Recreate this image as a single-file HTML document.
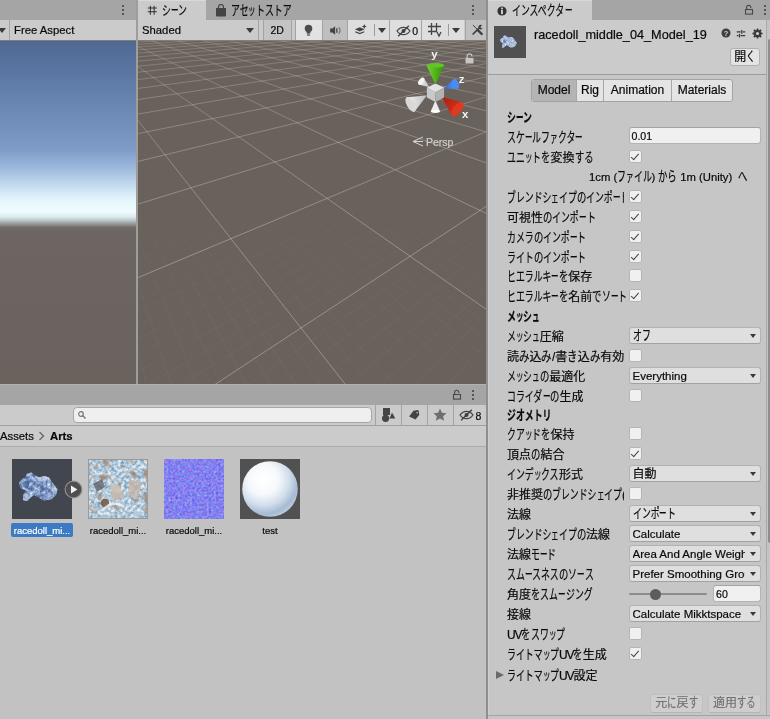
<!DOCTYPE html><html lang="ja"><head><meta charset="utf-8"><title>Unity</title><style>
*{box-sizing:border-box;margin:0;padding:0}
html,body{width:770px;height:719px;overflow:hidden;background:#c6c6c6}
body{position:relative;-webkit-font-smoothing:antialiased;-webkit-text-stroke-width:.2px;font-family:"Liberation Sans","Noto Sans CJK JP",sans-serif;font-size:12px;color:#090909;line-height:1}
.a{position:absolute}
.k{display:inline-block;white-space:nowrap;vertical-align:baseline;overflow:visible;font-size:1.12em;line-height:1}
.k>span{display:inline-block;transform-origin:0 50%;white-space:nowrap}
.t{position:absolute;white-space:nowrap;height:16px;line-height:16px}
.tabbar{background:#a5a5a5}
.tab{background:#cbcbcb}
.tb{background:#cbcbcb}
.dots i{position:absolute;left:0;width:2px;height:2px;background:#3c3c3c;border-radius:1px}
.vd{position:absolute;width:1px;background:#a3a3a3}
.fld{position:absolute;background:#f0f0f0;border:1px solid #b3b3b3;border-top-color:#a3a3a3;border-radius:3px;height:17px;line-height:17px;padding-left:2px;white-space:nowrap;overflow:hidden}
.dd{position:absolute;background:#dfdfdf;border:1px solid #b2b2b2;border-bottom-color:#a2a2a2;border-radius:3px;height:17px;line-height:16px;padding-left:3px;white-space:nowrap;overflow:hidden}
.dd:after{content:"";position:absolute;right:4.5px;top:5.5px;border:3.5px solid transparent;border-top:4.5px solid #3a3a3a;border-bottom:0}
.dd>span.v{display:block;width:112.5px;overflow:hidden;white-space:nowrap}
.cb{position:absolute;width:13px;height:13px;background:#f0f0f0;border:1px solid #b5b5b5;border-radius:2px}
.cb.on:after{content:"";position:absolute;left:3.7px;top:1.3px;width:3.3px;height:6.6px;border:solid #424242;border-width:0 1.8px 1.8px 0;transform:rotate(41deg)}
.lbl{position:absolute;left:507px;white-space:nowrap;height:18px;line-height:18px;margin-top:1.2px}
.b{font-weight:bold}
.l{font-size:11.3px}
.dd.l{font-size:11.5px}
.n{font-size:10.6px}
.uv{font-size:12px;letter-spacing:-1.1px}
</style></head><body><div id="root" style="position:absolute;left:0;top:0;width:770px;height:719px;will-change:transform">
<div class="a tabbar" style="left:0;top:0;width:136px;height:20px"></div>
<div class="a dots" style="left:122px;top:5px;width:2px;height:12px"><i style="top:0"></i><i style="top:4px"></i><i style="top:8px"></i></div>
<div class="a tabbar" style="left:138px;top:0;width:348px;height:20px"></div>
<div class="a tab" style="left:138px;top:0;width:68px;height:21px;border-top:1px solid #d8d8d8"></div>
<div class="a dots" style="left:472px;top:5px;width:2px;height:12px"><i style="top:0"></i><i style="top:4px"></i><i style="top:8px"></i></div>
<div class="a" style="left:136px;top:0;width:2px;height:385px;background:#a09c98"></div>
<div class="a" style="left:486px;top:0;width:2px;height:719px;background:#8f8f8f"></div>
<div class="a tb" style="left:0;top:20px;width:136px;height:20px"></div>
<div class="a tb" style="left:138px;top:20px;width:348px;height:20px"></div>
<div class="a" style="left:0;top:40px;width:136px;height:1px;background:#7f7f7f"></div>
<div class="a" style="left:138px;top:40px;width:348px;height:1px;background:#7f7f7f"></div>
<div class="a" style="left:0;top:28px;border:4px solid transparent;border-top:5px solid #3a3a3a;border-bottom:0;margin-left:-2px"></div>
<div class="vd" style="left:9px;top:20px;height:20px"></div>
<div class="t l" style="left:14px;top:22px">Free Aspect</div>
<svg class="a" style="left:146.6px;top:4.8px" width="10.5" height="10.5" viewBox="0 0 14 13"><g stroke="#2a2a2a" stroke-width="1.3" fill="none"><path d="M1 3.5h12M1 8.5h12M4.5 0.5v12M9.5 0.5v12"/></g></svg>
<div class="t" style="left:162px;top:3.2px"><span class="k" style="width:8.88px"><span style="transform:scaleX(0.661)">シ</span></span><span class="k" style="width:7.56px"><span style="transform:scaleX(0.562)">ー</span></span><span class="k" style="width:8.88px"><span style="transform:scaleX(0.661)">ン</span></span></div>
<svg class="a" style="left:215px;top:4px" width="12" height="13" viewBox="0 0 12 13"><path d="M1 4h10v7.5a1 1 0 0 1-1 1H2a1 1 0 0 1-1-1z" fill="#444"/><path d="M3.5 5V3a2.5 2.5 0 0 1 5 0v2" fill="none" stroke="#444" stroke-width="1.2"/></svg>
<div class="t" style="left:230.5px;top:3.2px"><span class="k" style="width:17.76px"><span style="transform:scaleX(0.661)">アセ</span></span><span class="k" style="width:7.56px"><span style="transform:scaleX(0.562)">ッ</span></span><span class="k" style="width:35.52px"><span style="transform:scaleX(0.661)">トストア</span></span></div>
<div class="t l" style="left:142px;top:22px">Shaded</div>
<div class="a" style="left:246px;top:28px;border:4px solid transparent;border-top:5px solid #3a3a3a;border-bottom:0"></div>
<div class="vd" style="left:258px;top:20px;height:20px"></div>
<div class="vd" style="left:263px;top:20px;height:20px"></div>
<div class="a" style="left:264px;top:20px;width:27px;height:20px;background:#c4c4c4"></div>
<div class="t" style="left:270.5px;top:22.3px;font-size:10.5px">2D</div>
<div class="vd" style="left:291px;top:20px;height:20px"></div>
<div class="vd" style="left:295px;top:20px;height:20px"></div>
<div class="a" style="left:296px;top:20px;width:27px;height:20px;background:#e2e2e2"></div>
<div class="a" style="left:323px;top:20px;width:25px;height:20px;background:#bfbfbf"></div>
<div class="a" style="left:348px;top:20px;width:42px;height:20px;background:#dedede"></div>
<div class="a" style="left:390px;top:20px;width:32px;height:20px;background:#dedede"></div>
<div class="a" style="left:422px;top:20px;width:42px;height:20px;background:#dedede"></div>
<div class="a" style="left:466px;top:20px;width:20px;height:20px;background:#c0c0c0"></div>
<div class="vd" style="left:322px;top:20px;height:20px"></div>
<div class="vd" style="left:347px;top:20px;height:20px"></div>
<div class="vd" style="left:389px;top:20px;height:20px"></div>
<div class="vd" style="left:421px;top:20px;height:20px"></div>
<div class="vd" style="left:465px;top:20px;height:20px"></div>
<svg class="a" style="left:303.4px;top:23.6px" width="11" height="13" viewBox="0 0 14 17"><g fill="#4d4d4d"><circle cx="7" cy="6" r="4.9"/><rect x="4.6" y="9" width="4.8" height="3.6"/><rect x="5" y="13.6" width="4" height="1.6"/></g></svg>
<svg class="a" style="left:328.5px;top:24.6px" width="14" height="11" viewBox="0 0 17 14"><path d="M1 4.6h2.8L7.4 1.6v10.8L3.8 9.4H1z" fill="#444"/><path d="M9.6 4v6" stroke="#444" stroke-width="1.7"/><path d="M12 2.8a6 6 0 0 1 0 8.4" stroke="#4a4a4a" stroke-width="1.1" fill="none"/></svg>
<svg class="a" style="left:353.5px;top:24px" width="14" height="11.5" viewBox="0 0 17 14"><path d="M1 6.5l6-2.5 6 2.5-6 2.5z" fill="#444"/><path d="M1.5 9.5l5.5 2.3 5.5-2.3" stroke="#444" stroke-width="1.5" fill="none"/><path d="M12.5 0l.9 2.1 2.1.9-2.1.9-.9 2.1-.9-2.1-2.1-.9 2.1-.9z" fill="#444"/></svg>
<div class="a" style="left:373.5px;top:24px;width:1px;height:12px;background:#9a9a9a"></div>
<div class="a" style="left:378px;top:28px;border:4px solid transparent;border-top:5px solid #3a3a3a;border-bottom:0"></div>
<svg class="a" style="left:395.5px;top:24.5px" width="15" height="12" viewBox="0 0 18 14"><path d="M1.2 7c2.4-3.4 4.9-4.4 7.8-4.4s5.4 1 7.8 4.4c-2.4 3.4-4.9 4.4-7.8 4.4s-5.4-1-7.8-4.4z" fill="none" stroke="#444" stroke-width="1.5"/><circle cx="9" cy="7" r="2.4" fill="#444"/><path d="M2.6 13.2L15.4 .8" stroke="#3e3e3e" stroke-width="1.6"/></svg>
<div class="t" style="left:412.3px;top:23.3px;font-size:10.5px">0</div>
<svg class="a" style="left:427px;top:22px" width="16" height="16" viewBox="0 0 16 16"><g stroke="#444" stroke-width="1.3" fill="none"><path d="M1 4.5h13M1 9.5h9M4.5 1v12M9.5 1v9"/><path d="M10 10l2 4 2-4" /></g></svg>
<div class="a" style="left:447.5px;top:24px;width:1px;height:12px;background:#9a9a9a"></div>
<div class="a" style="left:452px;top:28px;border:4px solid transparent;border-top:5px solid #3a3a3a;border-bottom:0"></div>
<svg class="a" style="left:470.5px;top:24px" width="12.5" height="11.6" viewBox="0 0 14 13"><path d="M1.8 11.8L9.6 4" stroke="#3c3c3c" stroke-width="1.8" fill="none"/><path d="M8.2 3.4a3 3 0 0 1 4.4-2.2l-2 2 .6 1.4 1.4.6 1.2-1.8a3 3 0 0 1-3.8 2.6z" fill="#3c3c3c"/><path d="M2.2 1.2L7 6" stroke="#3c3c3c" stroke-width="1.1"/><path d="M7.6 6.8L12 11.2" stroke="#3c3c3c" stroke-width="2.6" stroke-linecap="round"/></svg>
<div class="a" style="left:0;top:41px;width:136px;height:343px;background:linear-gradient(180deg,#506993 0px,#5a75a2 30px,#6683b0 57px,#7f9cc8 109px,#9db8dc 127px,#c5dcf0 145px,#e6f7fd 160px,#eefcff 171px,#dcebee 176px,#b4bfc1 180px,#8a8a89 184px,#716a67 186.5px,#6c6562 191px,#6a625d 343px)"></div>
<svg class="a" style="left:138px;top:41px" width="348" height="343" viewBox="0 0 348 343"><rect width="348" height="343" fill="#69615c"/>
<defs><linearGradient id="gv98" gradientUnits="userSpaceOnUse" x1="74.2" y1="345.3" x2="352.4" y2="162.5"><stop offset="0.00" stop-color="#d2cbc0" stop-opacity="0.44"/><stop offset="0.25" stop-color="#d2cbc0" stop-opacity="0.44"/><stop offset="0.50" stop-color="#d2cbc0" stop-opacity="0.44"/><stop offset="0.75" stop-color="#d2cbc0" stop-opacity="0.44"/><stop offset="1.00" stop-color="#d2cbc0" stop-opacity="0.41"/></linearGradient><linearGradient id="gv99" gradientUnits="userSpaceOnUse" x1="-4.1" y1="238.3" x2="353.0" y2="88.7"><stop offset="0.00" stop-color="#d2cbc0" stop-opacity="0.44"/><stop offset="0.25" stop-color="#d2cbc0" stop-opacity="0.44"/><stop offset="0.50" stop-color="#d2cbc0" stop-opacity="0.41"/><stop offset="0.75" stop-color="#d2cbc0" stop-opacity="0.38"/><stop offset="1.00" stop-color="#d2cbc0" stop-opacity="0.35"/></linearGradient><linearGradient id="gu100" gradientUnits="userSpaceOnUse" x1="209.9" y1="346.6" x2="-4.9" y2="73.2"><stop offset="0.00" stop-color="#d2cbc0" stop-opacity="0.44"/><stop offset="0.25" stop-color="#d2cbc0" stop-opacity="0.44"/><stop offset="0.50" stop-color="#d2cbc0" stop-opacity="0.44"/><stop offset="0.75" stop-color="#d2cbc0" stop-opacity="0.40"/><stop offset="1.00" stop-color="#d2cbc0" stop-opacity="0.33"/></linearGradient><linearGradient id="gv100" gradientUnits="userSpaceOnUse" x1="-4.6" y1="164.5" x2="352.7" y2="54.5"><stop offset="0.00" stop-color="#d2cbc0" stop-opacity="0.41"/><stop offset="0.25" stop-color="#d2cbc0" stop-opacity="0.39"/><stop offset="0.50" stop-color="#d2cbc0" stop-opacity="0.37"/><stop offset="0.75" stop-color="#d2cbc0" stop-opacity="0.34"/><stop offset="1.00" stop-color="#d2cbc0" stop-opacity="0.31"/></linearGradient><linearGradient id="gu101" gradientUnits="userSpaceOnUse" x1="351.8" y1="270.8" x2="-4.9" y2="22.3"><stop offset="0.00" stop-color="#d2cbc0" stop-opacity="0.44"/><stop offset="0.25" stop-color="#d2cbc0" stop-opacity="0.44"/><stop offset="0.50" stop-color="#d2cbc0" stop-opacity="0.40"/><stop offset="0.75" stop-color="#d2cbc0" stop-opacity="0.35"/><stop offset="1.00" stop-color="#d2cbc0" stop-opacity="0.27"/></linearGradient><linearGradient id="gv101" gradientUnits="userSpaceOnUse" x1="-4.9" y1="121.6" x2="352.6" y2="34.7"><stop offset="0.00" stop-color="#d2cbc0" stop-opacity="0.38"/><stop offset="0.25" stop-color="#d2cbc0" stop-opacity="0.36"/><stop offset="0.50" stop-color="#d2cbc0" stop-opacity="0.34"/><stop offset="0.75" stop-color="#d2cbc0" stop-opacity="0.32"/><stop offset="1.00" stop-color="#d2cbc0" stop-opacity="0.29"/></linearGradient><linearGradient id="gu102" gradientUnits="userSpaceOnUse" x1="353.0" y1="174.7" x2="-4.9" y2="3.1"><stop offset="0.00" stop-color="#d2cbc0" stop-opacity="0.42"/><stop offset="0.25" stop-color="#d2cbc0" stop-opacity="0.39"/><stop offset="0.50" stop-color="#d2cbc0" stop-opacity="0.35"/><stop offset="0.75" stop-color="#d2cbc0" stop-opacity="0.30"/><stop offset="1.00" stop-color="#d2cbc0" stop-opacity="0.23"/></linearGradient><linearGradient id="gv102" gradientUnits="userSpaceOnUse" x1="-3.4" y1="93.3" x2="352.8" y2="21.6"><stop offset="0.00" stop-color="#d2cbc0" stop-opacity="0.35"/><stop offset="0.25" stop-color="#d2cbc0" stop-opacity="0.34"/><stop offset="0.50" stop-color="#d2cbc0" stop-opacity="0.32"/><stop offset="0.75" stop-color="#d2cbc0" stop-opacity="0.29"/><stop offset="1.00" stop-color="#d2cbc0" stop-opacity="0.27"/></linearGradient><linearGradient id="gu103" gradientUnits="userSpaceOnUse" x1="351.8" y1="123.3" x2="0.6" y2="-5.0"><stop offset="0.00" stop-color="#d2cbc0" stop-opacity="0.38"/><stop offset="0.25" stop-color="#d2cbc0" stop-opacity="0.35"/><stop offset="0.50" stop-color="#d2cbc0" stop-opacity="0.32"/><stop offset="0.75" stop-color="#d2cbc0" stop-opacity="0.28"/><stop offset="1.00" stop-color="#d2cbc0" stop-opacity="0.22"/></linearGradient><linearGradient id="gv103" gradientUnits="userSpaceOnUse" x1="-3.7" y1="73.7" x2="352.7" y2="12.5"><stop offset="0.00" stop-color="#d2cbc0" stop-opacity="0.33"/><stop offset="0.25" stop-color="#d2cbc0" stop-opacity="0.32"/><stop offset="0.50" stop-color="#d2cbc0" stop-opacity="0.30"/><stop offset="0.75" stop-color="#d2cbc0" stop-opacity="0.28"/><stop offset="1.00" stop-color="#d2cbc0" stop-opacity="0.25"/></linearGradient><linearGradient id="gu104" gradientUnits="userSpaceOnUse" x1="352.5" y1="92.2" x2="23.0" y2="-5.0"><stop offset="0.00" stop-color="#d2cbc0" stop-opacity="0.35"/><stop offset="0.25" stop-color="#d2cbc0" stop-opacity="0.33"/><stop offset="0.50" stop-color="#d2cbc0" stop-opacity="0.30"/><stop offset="0.75" stop-color="#d2cbc0" stop-opacity="0.26"/><stop offset="1.00" stop-color="#d2cbc0" stop-opacity="0.22"/></linearGradient><linearGradient id="gv104" gradientUnits="userSpaceOnUse" x1="-4.0" y1="59.2" x2="352.9" y2="5.7"><stop offset="0.00" stop-color="#d2cbc0" stop-opacity="0.32"/><stop offset="0.25" stop-color="#d2cbc0" stop-opacity="0.30"/><stop offset="0.50" stop-color="#d2cbc0" stop-opacity="0.28"/><stop offset="0.75" stop-color="#d2cbc0" stop-opacity="0.26"/><stop offset="1.00" stop-color="#d2cbc0" stop-opacity="0.24"/></linearGradient><linearGradient id="gu105" gradientUnits="userSpaceOnUse" x1="351.8" y1="70.7" x2="45.5" y2="-5.0"><stop offset="0.00" stop-color="#d2cbc0" stop-opacity="0.33"/><stop offset="0.25" stop-color="#d2cbc0" stop-opacity="0.31"/><stop offset="0.50" stop-color="#d2cbc0" stop-opacity="0.28"/><stop offset="0.75" stop-color="#d2cbc0" stop-opacity="0.26"/><stop offset="1.00" stop-color="#d2cbc0" stop-opacity="0.22"/></linearGradient><linearGradient id="gv105" gradientUnits="userSpaceOnUse" x1="-4.2" y1="48.0" x2="352.8" y2="0.5"><stop offset="0.00" stop-color="#d2cbc0" stop-opacity="0.30"/><stop offset="0.25" stop-color="#d2cbc0" stop-opacity="0.29"/><stop offset="0.50" stop-color="#d2cbc0" stop-opacity="0.27"/><stop offset="0.75" stop-color="#d2cbc0" stop-opacity="0.25"/><stop offset="1.00" stop-color="#d2cbc0" stop-opacity="0.23"/></linearGradient><linearGradient id="gu106" gradientUnits="userSpaceOnUse" x1="352.3" y1="55.5" x2="68.0" y2="-5.0"><stop offset="0.00" stop-color="#d2cbc0" stop-opacity="0.31"/><stop offset="0.25" stop-color="#d2cbc0" stop-opacity="0.30"/><stop offset="0.50" stop-color="#d2cbc0" stop-opacity="0.27"/><stop offset="0.75" stop-color="#d2cbc0" stop-opacity="0.25"/><stop offset="1.00" stop-color="#d2cbc0" stop-opacity="0.22"/></linearGradient><linearGradient id="gv106" gradientUnits="userSpaceOnUse" x1="-4.4" y1="39.0" x2="352.9" y2="-3.6"><stop offset="0.00" stop-color="#d2cbc0" stop-opacity="0.29"/><stop offset="0.25" stop-color="#d2cbc0" stop-opacity="0.28"/><stop offset="0.50" stop-color="#d2cbc0" stop-opacity="0.26"/><stop offset="0.75" stop-color="#d2cbc0" stop-opacity="0.24"/><stop offset="1.00" stop-color="#d2cbc0" stop-opacity="0.22"/></linearGradient><linearGradient id="gu107" gradientUnits="userSpaceOnUse" x1="352.7" y1="44.0" x2="90.5" y2="-5.0"><stop offset="0.00" stop-color="#d2cbc0" stop-opacity="0.30"/><stop offset="0.25" stop-color="#d2cbc0" stop-opacity="0.28"/><stop offset="0.50" stop-color="#d2cbc0" stop-opacity="0.26"/><stop offset="0.75" stop-color="#d2cbc0" stop-opacity="0.24"/><stop offset="1.00" stop-color="#d2cbc0" stop-opacity="0.22"/></linearGradient><linearGradient id="gv107" gradientUnits="userSpaceOnUse" x1="-4.5" y1="31.7" x2="334.3" y2="-5.0"><stop offset="0.00" stop-color="#d2cbc0" stop-opacity="0.28"/><stop offset="0.25" stop-color="#d2cbc0" stop-opacity="0.27"/><stop offset="0.50" stop-color="#d2cbc0" stop-opacity="0.25"/><stop offset="0.75" stop-color="#d2cbc0" stop-opacity="0.24"/><stop offset="1.00" stop-color="#d2cbc0" stop-opacity="0.22"/></linearGradient><linearGradient id="gu108" gradientUnits="userSpaceOnUse" x1="352.2" y1="34.8" x2="113.1" y2="-5.0"><stop offset="0.00" stop-color="#d2cbc0" stop-opacity="0.29"/><stop offset="0.25" stop-color="#d2cbc0" stop-opacity="0.27"/><stop offset="0.50" stop-color="#d2cbc0" stop-opacity="0.26"/><stop offset="0.75" stop-color="#d2cbc0" stop-opacity="0.24"/><stop offset="1.00" stop-color="#d2cbc0" stop-opacity="0.22"/></linearGradient><linearGradient id="gv108" gradientUnits="userSpaceOnUse" x1="-4.7" y1="25.7" x2="304.4" y2="-5.0"><stop offset="0.00" stop-color="#d2cbc0" stop-opacity="0.27"/><stop offset="0.25" stop-color="#d2cbc0" stop-opacity="0.26"/><stop offset="0.50" stop-color="#d2cbc0" stop-opacity="0.25"/><stop offset="0.75" stop-color="#d2cbc0" stop-opacity="0.23"/><stop offset="1.00" stop-color="#d2cbc0" stop-opacity="0.22"/></linearGradient><linearGradient id="gu109" gradientUnits="userSpaceOnUse" x1="352.5" y1="27.5" x2="135.5" y2="-5.0"><stop offset="0.00" stop-color="#d2cbc0" stop-opacity="0.28"/><stop offset="0.25" stop-color="#d2cbc0" stop-opacity="0.26"/><stop offset="0.50" stop-color="#d2cbc0" stop-opacity="0.25"/><stop offset="0.75" stop-color="#d2cbc0" stop-opacity="0.24"/><stop offset="1.00" stop-color="#d2cbc0" stop-opacity="0.22"/></linearGradient><linearGradient id="gv109" gradientUnits="userSpaceOnUse" x1="-4.8" y1="20.6" x2="274.6" y2="-5.0"><stop offset="0.00" stop-color="#d2cbc0" stop-opacity="0.27"/><stop offset="0.25" stop-color="#d2cbc0" stop-opacity="0.26"/><stop offset="0.50" stop-color="#d2cbc0" stop-opacity="0.24"/><stop offset="0.75" stop-color="#d2cbc0" stop-opacity="0.23"/><stop offset="1.00" stop-color="#d2cbc0" stop-opacity="0.22"/></linearGradient><linearGradient id="gu110" gradientUnits="userSpaceOnUse" x1="352.8" y1="21.5" x2="158.2" y2="-5.0"><stop offset="0.00" stop-color="#d2cbc0" stop-opacity="0.27"/><stop offset="0.25" stop-color="#d2cbc0" stop-opacity="0.26"/><stop offset="0.50" stop-color="#d2cbc0" stop-opacity="0.25"/><stop offset="0.75" stop-color="#d2cbc0" stop-opacity="0.23"/><stop offset="1.00" stop-color="#d2cbc0" stop-opacity="0.22"/></linearGradient><linearGradient id="gv110" gradientUnits="userSpaceOnUse" x1="-4.8" y1="16.3" x2="244.9" y2="-5.0"><stop offset="0.00" stop-color="#d2cbc0" stop-opacity="0.26"/><stop offset="0.25" stop-color="#d2cbc0" stop-opacity="0.25"/><stop offset="0.50" stop-color="#d2cbc0" stop-opacity="0.24"/><stop offset="0.75" stop-color="#d2cbc0" stop-opacity="0.23"/><stop offset="1.00" stop-color="#d2cbc0" stop-opacity="0.22"/></linearGradient><linearGradient id="gu111" gradientUnits="userSpaceOnUse" x1="352.4" y1="16.4" x2="180.9" y2="-5.0"><stop offset="0.00" stop-color="#d2cbc0" stop-opacity="0.26"/><stop offset="0.25" stop-color="#d2cbc0" stop-opacity="0.25"/><stop offset="0.50" stop-color="#d2cbc0" stop-opacity="0.24"/><stop offset="0.75" stop-color="#d2cbc0" stop-opacity="0.23"/><stop offset="1.00" stop-color="#d2cbc0" stop-opacity="0.22"/></linearGradient><linearGradient id="gv111" gradientUnits="userSpaceOnUse" x1="-4.9" y1="12.5" x2="214.9" y2="-5.0"><stop offset="0.00" stop-color="#d2cbc0" stop-opacity="0.25"/><stop offset="0.25" stop-color="#d2cbc0" stop-opacity="0.24"/><stop offset="0.50" stop-color="#d2cbc0" stop-opacity="0.24"/><stop offset="0.75" stop-color="#d2cbc0" stop-opacity="0.23"/><stop offset="1.00" stop-color="#d2cbc0" stop-opacity="0.22"/></linearGradient><linearGradient id="gu112" gradientUnits="userSpaceOnUse" x1="352.6" y1="12.2" x2="203.7" y2="-5.0"><stop offset="0.00" stop-color="#d2cbc0" stop-opacity="0.25"/><stop offset="0.25" stop-color="#d2cbc0" stop-opacity="0.25"/><stop offset="0.50" stop-color="#d2cbc0" stop-opacity="0.24"/><stop offset="0.75" stop-color="#d2cbc0" stop-opacity="0.23"/><stop offset="1.00" stop-color="#d2cbc0" stop-opacity="0.22"/></linearGradient><linearGradient id="gv112" gradientUnits="userSpaceOnUse" x1="-5.0" y1="9.2" x2="185.3" y2="-5.0"><stop offset="0.00" stop-color="#d2cbc0" stop-opacity="0.25"/><stop offset="0.25" stop-color="#d2cbc0" stop-opacity="0.24"/><stop offset="0.50" stop-color="#d2cbc0" stop-opacity="0.23"/><stop offset="0.75" stop-color="#d2cbc0" stop-opacity="0.23"/><stop offset="1.00" stop-color="#d2cbc0" stop-opacity="0.22"/></linearGradient><linearGradient id="gu113" gradientUnits="userSpaceOnUse" x1="352.9" y1="8.5" x2="226.5" y2="-5.0"><stop offset="0.00" stop-color="#d2cbc0" stop-opacity="0.25"/><stop offset="0.25" stop-color="#d2cbc0" stop-opacity="0.24"/><stop offset="0.50" stop-color="#d2cbc0" stop-opacity="0.23"/><stop offset="0.75" stop-color="#d2cbc0" stop-opacity="0.23"/><stop offset="1.00" stop-color="#d2cbc0" stop-opacity="0.22"/></linearGradient><linearGradient id="gv113" gradientUnits="userSpaceOnUse" x1="-4.5" y1="6.3" x2="155.8" y2="-5.0"><stop offset="0.00" stop-color="#d2cbc0" stop-opacity="0.24"/><stop offset="0.25" stop-color="#d2cbc0" stop-opacity="0.24"/><stop offset="0.50" stop-color="#d2cbc0" stop-opacity="0.23"/><stop offset="0.75" stop-color="#d2cbc0" stop-opacity="0.22"/><stop offset="1.00" stop-color="#d2cbc0" stop-opacity="0.22"/></linearGradient><linearGradient id="gu114" gradientUnits="userSpaceOnUse" x1="352.5" y1="5.3" x2="249.4" y2="-5.0"><stop offset="0.00" stop-color="#d2cbc0" stop-opacity="0.24"/><stop offset="0.25" stop-color="#d2cbc0" stop-opacity="0.24"/><stop offset="0.50" stop-color="#d2cbc0" stop-opacity="0.23"/><stop offset="0.75" stop-color="#d2cbc0" stop-opacity="0.22"/><stop offset="1.00" stop-color="#d2cbc0" stop-opacity="0.22"/></linearGradient><linearGradient id="gv114" gradientUnits="userSpaceOnUse" x1="-4.5" y1="3.7" x2="126.4" y2="-5.0"><stop offset="0.00" stop-color="#d2cbc0" stop-opacity="0.24"/><stop offset="0.25" stop-color="#d2cbc0" stop-opacity="0.23"/><stop offset="0.50" stop-color="#d2cbc0" stop-opacity="0.23"/><stop offset="0.75" stop-color="#d2cbc0" stop-opacity="0.22"/><stop offset="1.00" stop-color="#d2cbc0" stop-opacity="0.22"/></linearGradient><linearGradient id="gu115" gradientUnits="userSpaceOnUse" x1="352.7" y1="2.6" x2="272.3" y2="-5.0"><stop offset="0.00" stop-color="#d2cbc0" stop-opacity="0.23"/><stop offset="0.25" stop-color="#d2cbc0" stop-opacity="0.23"/><stop offset="0.50" stop-color="#d2cbc0" stop-opacity="0.23"/><stop offset="0.75" stop-color="#d2cbc0" stop-opacity="0.22"/><stop offset="1.00" stop-color="#d2cbc0" stop-opacity="0.22"/></linearGradient><linearGradient id="gv115" gradientUnits="userSpaceOnUse" x1="-4.6" y1="1.4" x2="97.1" y2="-5.0"><stop offset="0.00" stop-color="#d2cbc0" stop-opacity="0.23"/><stop offset="0.25" stop-color="#d2cbc0" stop-opacity="0.23"/><stop offset="0.50" stop-color="#d2cbc0" stop-opacity="0.23"/><stop offset="0.75" stop-color="#d2cbc0" stop-opacity="0.22"/><stop offset="1.00" stop-color="#d2cbc0" stop-opacity="0.22"/></linearGradient><linearGradient id="gu116" gradientUnits="userSpaceOnUse" x1="352.9" y1="0.1" x2="295.2" y2="-5.0"><stop offset="0.00" stop-color="#d2cbc0" stop-opacity="0.23"/><stop offset="0.25" stop-color="#d2cbc0" stop-opacity="0.23"/><stop offset="0.50" stop-color="#d2cbc0" stop-opacity="0.22"/><stop offset="0.75" stop-color="#d2cbc0" stop-opacity="0.22"/><stop offset="1.00" stop-color="#d2cbc0" stop-opacity="0.22"/></linearGradient><linearGradient id="gv116" gradientUnits="userSpaceOnUse" x1="-4.7" y1="-0.7" x2="67.8" y2="-5.0"><stop offset="0.00" stop-color="#d2cbc0" stop-opacity="0.23"/><stop offset="0.25" stop-color="#d2cbc0" stop-opacity="0.23"/><stop offset="0.50" stop-color="#d2cbc0" stop-opacity="0.22"/><stop offset="0.75" stop-color="#d2cbc0" stop-opacity="0.22"/><stop offset="1.00" stop-color="#d2cbc0" stop-opacity="0.22"/></linearGradient><linearGradient id="gu117" gradientUnits="userSpaceOnUse" x1="352.6" y1="-2.1" x2="318.2" y2="-5.0"><stop offset="0.00" stop-color="#d2cbc0" stop-opacity="0.23"/><stop offset="0.25" stop-color="#d2cbc0" stop-opacity="0.22"/><stop offset="0.50" stop-color="#d2cbc0" stop-opacity="0.22"/><stop offset="0.75" stop-color="#d2cbc0" stop-opacity="0.22"/><stop offset="1.00" stop-color="#d2cbc0" stop-opacity="0.22"/></linearGradient><linearGradient id="gv117" gradientUnits="userSpaceOnUse" x1="-4.7" y1="-2.5" x2="38.6" y2="-5.0"><stop offset="0.00" stop-color="#d2cbc0" stop-opacity="0.22"/><stop offset="0.25" stop-color="#d2cbc0" stop-opacity="0.22"/><stop offset="0.50" stop-color="#d2cbc0" stop-opacity="0.22"/><stop offset="0.75" stop-color="#d2cbc0" stop-opacity="0.22"/><stop offset="1.00" stop-color="#d2cbc0" stop-opacity="0.22"/></linearGradient><linearGradient id="gu118" gradientUnits="userSpaceOnUse" x1="352.8" y1="-4.1" x2="341.3" y2="-5.0"><stop offset="0.00" stop-color="#d2cbc0" stop-opacity="0.22"/><stop offset="0.25" stop-color="#d2cbc0" stop-opacity="0.22"/><stop offset="0.50" stop-color="#d2cbc0" stop-opacity="0.22"/><stop offset="0.75" stop-color="#d2cbc0" stop-opacity="0.22"/><stop offset="1.00" stop-color="#d2cbc0" stop-opacity="0.22"/></linearGradient><linearGradient id="gv118" gradientUnits="userSpaceOnUse" x1="-4.8" y1="-4.2" x2="9.5" y2="-5.0"><stop offset="0.00" stop-color="#d2cbc0" stop-opacity="0.22"/><stop offset="0.25" stop-color="#d2cbc0" stop-opacity="0.22"/><stop offset="0.50" stop-color="#d2cbc0" stop-opacity="0.22"/><stop offset="0.75" stop-color="#d2cbc0" stop-opacity="0.22"/><stop offset="1.00" stop-color="#d2cbc0" stop-opacity="0.22"/></linearGradient></defs>
<g stroke-width="1" fill="none"><line x1="340.1" y1="347.4" x2="341.9" y2="345.1" stroke="#d2cbc0" stroke-opacity="0.057"/>
<line x1="341.9" y1="345.1" x2="343.8" y2="342.8" stroke="#d2cbc0" stroke-opacity="0.056"/>
<line x1="343.8" y1="342.8" x2="345.7" y2="340.6" stroke="#d2cbc0" stroke-opacity="0.056"/>
<line x1="345.7" y1="340.6" x2="347.6" y2="338.3" stroke="#d2cbc0" stroke-opacity="0.056"/>
<line x1="347.6" y1="338.3" x2="349.5" y2="336.0" stroke="#d2cbc0" stroke-opacity="0.056"/>
<line x1="349.5" y1="336.0" x2="351.4" y2="333.7" stroke="#d2cbc0" stroke-opacity="0.055"/>
<line x1="306.6" y1="347.1" x2="314.2" y2="338.9" stroke="#d2cbc0" stroke-opacity="0.056"/>
<line x1="314.2" y1="338.9" x2="321.7" y2="330.7" stroke="#d2cbc0" stroke-opacity="0.055"/>
<line x1="321.7" y1="330.7" x2="329.2" y2="322.4" stroke="#d2cbc0" stroke-opacity="0.054"/>
<line x1="329.2" y1="322.4" x2="336.8" y2="314.2" stroke="#d2cbc0" stroke-opacity="0.053"/>
<line x1="336.8" y1="314.2" x2="344.3" y2="306.0" stroke="#d2cbc0" stroke-opacity="0.052"/>
<line x1="344.3" y1="306.0" x2="351.8" y2="297.7" stroke="#d2cbc0" stroke-opacity="0.051"/>
<line x1="273.3" y1="346.9" x2="286.4" y2="333.7" stroke="#d2cbc0" stroke-opacity="0.056"/>
<line x1="286.4" y1="333.7" x2="299.6" y2="320.6" stroke="#d2cbc0" stroke-opacity="0.054"/>
<line x1="299.6" y1="320.6" x2="312.7" y2="307.5" stroke="#d2cbc0" stroke-opacity="0.052"/>
<line x1="312.7" y1="307.5" x2="325.9" y2="294.3" stroke="#d2cbc0" stroke-opacity="0.050"/>
<line x1="325.9" y1="294.3" x2="339.1" y2="281.2" stroke="#d2cbc0" stroke-opacity="0.048"/>
<line x1="339.1" y1="281.2" x2="352.2" y2="268.1" stroke="#d2cbc0" stroke-opacity="0.046"/>
<line x1="239.9" y1="346.6" x2="258.7" y2="329.4" stroke="#d2cbc0" stroke-opacity="0.056"/>
<line x1="258.7" y1="329.4" x2="277.5" y2="312.1" stroke="#d2cbc0" stroke-opacity="0.053"/>
<line x1="277.5" y1="312.1" x2="296.2" y2="294.9" stroke="#d2cbc0" stroke-opacity="0.051"/>
<line x1="296.2" y1="294.9" x2="315.0" y2="277.7" stroke="#d2cbc0" stroke-opacity="0.048"/>
<line x1="315.0" y1="277.7" x2="333.8" y2="260.4" stroke="#d2cbc0" stroke-opacity="0.045"/>
<line x1="333.8" y1="260.4" x2="352.5" y2="243.2" stroke="#d2cbc0" stroke-opacity="0.041"/>
<line x1="206.7" y1="346.4" x2="231.0" y2="325.6" stroke="#d2cbc0" stroke-opacity="0.055"/>
<line x1="231.0" y1="325.6" x2="255.4" y2="304.9" stroke="#d2cbc0" stroke-opacity="0.053"/>
<line x1="255.4" y1="304.9" x2="279.7" y2="284.2" stroke="#d2cbc0" stroke-opacity="0.049"/>
<line x1="279.7" y1="284.2" x2="304.1" y2="263.5" stroke="#d2cbc0" stroke-opacity="0.046"/>
<line x1="304.1" y1="263.5" x2="328.4" y2="242.7" stroke="#d2cbc0" stroke-opacity="0.041"/>
<line x1="328.4" y1="242.7" x2="352.8" y2="222.0" stroke="#d2cbc0" stroke-opacity="0.037"/>
<line x1="173.5" y1="346.1" x2="203.2" y2="322.6" stroke="#d2cbc0" stroke-opacity="0.055"/>
<line x1="203.2" y1="322.6" x2="232.9" y2="299.0" stroke="#d2cbc0" stroke-opacity="0.052"/>
<line x1="232.9" y1="299.0" x2="262.5" y2="275.5" stroke="#d2cbc0" stroke-opacity="0.048"/>
<line x1="262.5" y1="275.5" x2="292.2" y2="252.0" stroke="#d2cbc0" stroke-opacity="0.044"/>
<line x1="292.2" y1="252.0" x2="321.9" y2="228.5" stroke="#d2cbc0" stroke-opacity="0.039"/>
<line x1="321.9" y1="228.5" x2="351.6" y2="204.9" stroke="#d2cbc0" stroke-opacity="0.032"/>
<line x1="140.3" y1="345.8" x2="175.6" y2="319.7" stroke="#d2cbc0" stroke-opacity="0.055"/>
<line x1="175.6" y1="319.7" x2="210.8" y2="293.5" stroke="#d2cbc0" stroke-opacity="0.051"/>
<line x1="210.8" y1="293.5" x2="246.1" y2="267.4" stroke="#d2cbc0" stroke-opacity="0.047"/>
<line x1="246.1" y1="267.4" x2="281.4" y2="241.2" stroke="#d2cbc0" stroke-opacity="0.042"/>
<line x1="281.4" y1="241.2" x2="316.6" y2="215.1" stroke="#d2cbc0" stroke-opacity="0.036"/>
<line x1="316.6" y1="215.1" x2="351.9" y2="188.9" stroke="#d2cbc0" stroke-opacity="0.028"/>
<line x1="107.2" y1="345.6" x2="148.0" y2="317.1" stroke="#d2cbc0" stroke-opacity="0.055"/>
<line x1="148.0" y1="317.1" x2="188.9" y2="288.7" stroke="#d2cbc0" stroke-opacity="0.051"/>
<line x1="188.9" y1="288.7" x2="229.7" y2="260.3" stroke="#d2cbc0" stroke-opacity="0.046"/>
<line x1="229.7" y1="260.3" x2="270.5" y2="231.8" stroke="#d2cbc0" stroke-opacity="0.040"/>
<line x1="270.5" y1="231.8" x2="311.3" y2="203.4" stroke="#d2cbc0" stroke-opacity="0.033"/>
<line x1="311.3" y1="203.4" x2="352.2" y2="174.9" stroke="#d2cbc0" stroke-opacity="0.024"/>
<line x1="36.6" y1="347.9" x2="89.3" y2="315.2" stroke="#d2cbc0" stroke-opacity="0.055"/>
<line x1="89.3" y1="315.2" x2="141.9" y2="282.4" stroke="#d2cbc0" stroke-opacity="0.050"/>
<line x1="141.9" y1="282.4" x2="194.6" y2="249.7" stroke="#d2cbc0" stroke-opacity="0.044"/>
<line x1="194.6" y1="249.7" x2="247.3" y2="216.9" stroke="#d2cbc0" stroke-opacity="0.037"/>
<line x1="247.3" y1="216.9" x2="299.9" y2="184.2" stroke="#d2cbc0" stroke-opacity="0.028"/>
<line x1="299.9" y1="184.2" x2="352.6" y2="151.4" stroke="#d2cbc0" stroke-opacity="0.015"/>
<line x1="3.4" y1="347.6" x2="61.7" y2="313.3" stroke="#d2cbc0" stroke-opacity="0.055"/>
<line x1="61.7" y1="313.3" x2="119.9" y2="278.9" stroke="#d2cbc0" stroke-opacity="0.050"/>
<line x1="119.9" y1="278.9" x2="178.1" y2="244.6" stroke="#d2cbc0" stroke-opacity="0.043"/>
<line x1="178.1" y1="244.6" x2="236.3" y2="210.2" stroke="#d2cbc0" stroke-opacity="0.035"/>
<line x1="236.3" y1="210.2" x2="294.5" y2="175.9" stroke="#d2cbc0" stroke-opacity="0.025"/>
<line x1="-0.7" y1="331.1" x2="58.3" y2="298.0" stroke="#d2cbc0" stroke-opacity="0.052"/>
<line x1="58.3" y1="298.0" x2="117.2" y2="264.9" stroke="#d2cbc0" stroke-opacity="0.047"/>
<line x1="117.2" y1="264.9" x2="176.1" y2="231.9" stroke="#d2cbc0" stroke-opacity="0.040"/>
<line x1="176.1" y1="231.9" x2="235.1" y2="198.8" stroke="#d2cbc0" stroke-opacity="0.032"/>
<line x1="235.1" y1="198.8" x2="294.0" y2="165.7" stroke="#d2cbc0" stroke-opacity="0.021"/>
<line x1="-4.5" y1="315.9" x2="55.0" y2="284.1" stroke="#d2cbc0" stroke-opacity="0.050"/>
<line x1="55.0" y1="284.1" x2="114.4" y2="252.3" stroke="#d2cbc0" stroke-opacity="0.044"/>
<line x1="114.4" y1="252.3" x2="173.8" y2="220.5" stroke="#d2cbc0" stroke-opacity="0.038"/>
<line x1="173.8" y1="220.5" x2="233.3" y2="188.7" stroke="#d2cbc0" stroke-opacity="0.029"/>
<line x1="233.3" y1="188.7" x2="292.7" y2="156.8" stroke="#d2cbc0" stroke-opacity="0.017"/>
<line x1="-3.7" y1="299.7" x2="55.6" y2="269.4" stroke="#d2cbc0" stroke-opacity="0.048"/>
<line x1="55.6" y1="269.4" x2="115.0" y2="239.0" stroke="#d2cbc0" stroke-opacity="0.042"/>
<line x1="115.0" y1="239.0" x2="174.3" y2="208.7" stroke="#d2cbc0" stroke-opacity="0.034"/>
<line x1="174.3" y1="208.7" x2="233.6" y2="178.3" stroke="#d2cbc0" stroke-opacity="0.025"/>
<line x1="233.6" y1="178.3" x2="293.0" y2="148.0" stroke="#d2cbc0" stroke-opacity="0.013"/>
<line x1="-3.0" y1="285.0" x2="56.3" y2="256.0" stroke="#d2cbc0" stroke-opacity="0.045"/>
<line x1="56.3" y1="256.0" x2="115.5" y2="226.9" stroke="#d2cbc0" stroke-opacity="0.039"/>
<line x1="115.5" y1="226.9" x2="174.7" y2="197.9" stroke="#d2cbc0" stroke-opacity="0.031"/>
<line x1="174.7" y1="197.9" x2="234.0" y2="168.9" stroke="#d2cbc0" stroke-opacity="0.022"/>
<line x1="-2.3" y1="271.4" x2="56.8" y2="243.6" stroke="#d2cbc0" stroke-opacity="0.042"/>
<line x1="56.8" y1="243.6" x2="116.0" y2="215.8" stroke="#d2cbc0" stroke-opacity="0.036"/>
<line x1="116.0" y1="215.8" x2="175.2" y2="188.0" stroke="#d2cbc0" stroke-opacity="0.028"/>
<line x1="175.2" y1="188.0" x2="234.3" y2="160.2" stroke="#d2cbc0" stroke-opacity="0.018"/>
<line x1="-1.7" y1="259.0" x2="57.4" y2="232.3" stroke="#d2cbc0" stroke-opacity="0.040"/>
<line x1="57.4" y1="232.3" x2="116.4" y2="205.6" stroke="#d2cbc0" stroke-opacity="0.033"/>
<line x1="116.4" y1="205.6" x2="175.5" y2="178.9" stroke="#d2cbc0" stroke-opacity="0.025"/>
<line x1="175.5" y1="178.9" x2="234.6" y2="152.3" stroke="#d2cbc0" stroke-opacity="0.014"/>
<line x1="-4.7" y1="249.1" x2="54.9" y2="223.2" stroke="#d2cbc0" stroke-opacity="0.037"/>
<line x1="54.9" y1="223.2" x2="114.5" y2="197.2" stroke="#d2cbc0" stroke-opacity="0.030"/>
<line x1="114.5" y1="197.2" x2="174.1" y2="171.3" stroke="#d2cbc0" stroke-opacity="0.022"/>
<line x1="-3.5" y1="228.3" x2="55.8" y2="204.3" stroke="#d2cbc0" stroke-opacity="0.032"/>
<line x1="55.8" y1="204.3" x2="115.1" y2="180.4" stroke="#d2cbc0" stroke-opacity="0.025"/>
<line x1="115.1" y1="180.4" x2="174.5" y2="156.4" stroke="#d2cbc0" stroke-opacity="0.015"/>
<line x1="9.9" y1="347.1" x2="7.4" y2="337.9" stroke="#d2cbc0" stroke-opacity="0.056"/>
<line x1="7.4" y1="337.9" x2="5.0" y2="328.7" stroke="#d2cbc0" stroke-opacity="0.055"/>
<line x1="5.0" y1="328.7" x2="2.5" y2="319.5" stroke="#d2cbc0" stroke-opacity="0.054"/>
<line x1="2.5" y1="319.5" x2="0.0" y2="310.3" stroke="#d2cbc0" stroke-opacity="0.052"/>
<line x1="0.0" y1="310.3" x2="-2.4" y2="301.1" stroke="#d2cbc0" stroke-opacity="0.051"/>
<line x1="-2.4" y1="301.1" x2="-4.9" y2="291.9" stroke="#d2cbc0" stroke-opacity="0.050"/>
<line x1="-2.9" y1="219.0" x2="56.3" y2="195.9" stroke="#d2cbc0" stroke-opacity="0.030"/>
<line x1="56.3" y1="195.9" x2="115.6" y2="172.8" stroke="#d2cbc0" stroke-opacity="0.022"/>
<line x1="115.6" y1="172.8" x2="174.8" y2="149.6" stroke="#d2cbc0" stroke-opacity="0.012"/>
<line x1="34.4" y1="345.6" x2="27.9" y2="326.0" stroke="#d2cbc0" stroke-opacity="0.055"/>
<line x1="27.9" y1="326.0" x2="21.4" y2="306.4" stroke="#d2cbc0" stroke-opacity="0.053"/>
<line x1="21.4" y1="306.4" x2="14.9" y2="286.8" stroke="#d2cbc0" stroke-opacity="0.050"/>
<line x1="14.9" y1="286.8" x2="8.4" y2="267.2" stroke="#d2cbc0" stroke-opacity="0.046"/>
<line x1="8.4" y1="267.2" x2="1.9" y2="247.6" stroke="#d2cbc0" stroke-opacity="0.042"/>
<line x1="1.9" y1="247.6" x2="-4.6" y2="228.0" stroke="#d2cbc0" stroke-opacity="0.038"/>
<line x1="-2.4" y1="210.4" x2="56.8" y2="188.0" stroke="#d2cbc0" stroke-opacity="0.027"/>
<line x1="56.8" y1="188.0" x2="116.0" y2="165.6" stroke="#d2cbc0" stroke-opacity="0.019"/>
<line x1="60.3" y1="347.9" x2="49.4" y2="320.5" stroke="#d2cbc0" stroke-opacity="0.055"/>
<line x1="49.4" y1="320.5" x2="38.6" y2="293.2" stroke="#d2cbc0" stroke-opacity="0.051"/>
<line x1="38.6" y1="293.2" x2="27.7" y2="265.8" stroke="#d2cbc0" stroke-opacity="0.047"/>
<line x1="27.7" y1="265.8" x2="16.8" y2="238.4" stroke="#d2cbc0" stroke-opacity="0.041"/>
<line x1="16.8" y1="238.4" x2="6.0" y2="211.0" stroke="#d2cbc0" stroke-opacity="0.034"/>
<line x1="6.0" y1="211.0" x2="-4.9" y2="183.6" stroke="#d2cbc0" stroke-opacity="0.026"/>
<line x1="-4.9" y1="203.4" x2="54.7" y2="181.6" stroke="#d2cbc0" stroke-opacity="0.025"/>
<line x1="54.7" y1="181.6" x2="114.3" y2="159.7" stroke="#d2cbc0" stroke-opacity="0.016"/>
<line x1="84.7" y1="346.5" x2="69.8" y2="314.2" stroke="#d2cbc0" stroke-opacity="0.055"/>
<line x1="69.8" y1="314.2" x2="54.9" y2="281.9" stroke="#d2cbc0" stroke-opacity="0.050"/>
<line x1="54.9" y1="281.9" x2="40.0" y2="249.6" stroke="#d2cbc0" stroke-opacity="0.044"/>
<line x1="40.0" y1="249.6" x2="25.1" y2="217.3" stroke="#d2cbc0" stroke-opacity="0.037"/>
<line x1="25.1" y1="217.3" x2="10.2" y2="185.0" stroke="#d2cbc0" stroke-opacity="0.028"/>
<line x1="10.2" y1="185.0" x2="-4.7" y2="152.7" stroke="#d2cbc0" stroke-opacity="0.016"/>
<line x1="-4.4" y1="195.7" x2="55.2" y2="174.6" stroke="#d2cbc0" stroke-opacity="0.022"/>
<line x1="55.2" y1="174.6" x2="114.7" y2="153.5" stroke="#d2cbc0" stroke-opacity="0.014"/>
<line x1="108.9" y1="345.0" x2="89.9" y2="308.9" stroke="#d2cbc0" stroke-opacity="0.054"/>
<line x1="89.9" y1="308.9" x2="71.0" y2="272.9" stroke="#d2cbc0" stroke-opacity="0.049"/>
<line x1="71.0" y1="272.9" x2="52.0" y2="236.8" stroke="#d2cbc0" stroke-opacity="0.042"/>
<line x1="52.0" y1="236.8" x2="33.0" y2="200.8" stroke="#d2cbc0" stroke-opacity="0.033"/>
<line x1="33.0" y1="200.8" x2="14.1" y2="164.7" stroke="#d2cbc0" stroke-opacity="0.021"/>
<line x1="-3.8" y1="188.5" x2="55.6" y2="168.1" stroke="#d2cbc0" stroke-opacity="0.019"/>
<line x1="135.2" y1="347.3" x2="111.9" y2="307.8" stroke="#d2cbc0" stroke-opacity="0.054"/>
<line x1="111.9" y1="307.8" x2="88.5" y2="268.4" stroke="#d2cbc0" stroke-opacity="0.048"/>
<line x1="88.5" y1="268.4" x2="65.2" y2="228.9" stroke="#d2cbc0" stroke-opacity="0.040"/>
<line x1="65.2" y1="228.9" x2="41.9" y2="189.4" stroke="#d2cbc0" stroke-opacity="0.030"/>
<line x1="41.9" y1="189.4" x2="18.6" y2="150.0" stroke="#d2cbc0" stroke-opacity="0.016"/>
<line x1="-3.3" y1="181.8" x2="56.0" y2="161.9" stroke="#d2cbc0" stroke-opacity="0.017"/>
<line x1="159.3" y1="345.8" x2="131.9" y2="304.1" stroke="#d2cbc0" stroke-opacity="0.054"/>
<line x1="131.9" y1="304.1" x2="104.6" y2="262.4" stroke="#d2cbc0" stroke-opacity="0.047"/>
<line x1="104.6" y1="262.4" x2="77.2" y2="220.6" stroke="#d2cbc0" stroke-opacity="0.039"/>
<line x1="77.2" y1="220.6" x2="49.8" y2="178.9" stroke="#d2cbc0" stroke-opacity="0.027"/>
<line x1="-2.9" y1="175.4" x2="56.4" y2="156.1" stroke="#d2cbc0" stroke-opacity="0.014"/>
<line x1="183.2" y1="344.4" x2="151.9" y2="300.9" stroke="#d2cbc0" stroke-opacity="0.054"/>
<line x1="151.9" y1="300.9" x2="120.6" y2="257.4" stroke="#d2cbc0" stroke-opacity="0.047"/>
<line x1="120.6" y1="257.4" x2="89.2" y2="213.9" stroke="#d2cbc0" stroke-opacity="0.037"/>
<line x1="89.2" y1="213.9" x2="57.9" y2="170.4" stroke="#d2cbc0" stroke-opacity="0.025"/>
<line x1="233.7" y1="345.2" x2="193.9" y2="298.4" stroke="#d2cbc0" stroke-opacity="0.053"/>
<line x1="193.9" y1="298.4" x2="154.2" y2="251.7" stroke="#d2cbc0" stroke-opacity="0.046"/>
<line x1="154.2" y1="251.7" x2="114.4" y2="205.0" stroke="#d2cbc0" stroke-opacity="0.035"/>
<line x1="114.4" y1="205.0" x2="74.7" y2="158.2" stroke="#d2cbc0" stroke-opacity="0.021"/>
<line x1="260.8" y1="347.5" x2="216.5" y2="299.1" stroke="#d2cbc0" stroke-opacity="0.054"/>
<line x1="216.5" y1="299.1" x2="172.2" y2="250.7" stroke="#d2cbc0" stroke-opacity="0.046"/>
<line x1="172.2" y1="250.7" x2="127.9" y2="202.4" stroke="#d2cbc0" stroke-opacity="0.035"/>
<line x1="127.9" y1="202.4" x2="83.6" y2="154.0" stroke="#d2cbc0" stroke-opacity="0.019"/>
<line x1="284.4" y1="346.0" x2="236.2" y2="296.8" stroke="#d2cbc0" stroke-opacity="0.053"/>
<line x1="236.2" y1="296.8" x2="188.0" y2="247.6" stroke="#d2cbc0" stroke-opacity="0.045"/>
<line x1="188.0" y1="247.6" x2="139.8" y2="198.5" stroke="#d2cbc0" stroke-opacity="0.034"/>
<line x1="139.8" y1="198.5" x2="91.6" y2="149.3" stroke="#d2cbc0" stroke-opacity="0.018"/>
<line x1="307.9" y1="344.5" x2="255.8" y2="294.7" stroke="#d2cbc0" stroke-opacity="0.053"/>
<line x1="255.8" y1="294.7" x2="203.6" y2="244.8" stroke="#d2cbc0" stroke-opacity="0.045"/>
<line x1="203.6" y1="244.8" x2="151.5" y2="194.9" stroke="#d2cbc0" stroke-opacity="0.033"/>
<line x1="151.5" y1="194.9" x2="99.3" y2="145.0" stroke="#d2cbc0" stroke-opacity="0.016"/>
<line x1="335.4" y1="346.8" x2="278.7" y2="295.8" stroke="#d2cbc0" stroke-opacity="0.053"/>
<line x1="278.7" y1="295.8" x2="222.0" y2="244.7" stroke="#d2cbc0" stroke-opacity="0.045"/>
<line x1="222.0" y1="244.7" x2="165.3" y2="193.6" stroke="#d2cbc0" stroke-opacity="0.033"/>
<line x1="165.3" y1="193.6" x2="108.6" y2="142.5" stroke="#d2cbc0" stroke-opacity="0.015"/>
<line x1="350.1" y1="338.0" x2="290.9" y2="287.6" stroke="#d2cbc0" stroke-opacity="0.052"/>
<line x1="290.9" y1="287.6" x2="231.7" y2="237.3" stroke="#d2cbc0" stroke-opacity="0.043"/>
<line x1="231.7" y1="237.3" x2="172.6" y2="186.9" stroke="#d2cbc0" stroke-opacity="0.031"/>
<line x1="172.6" y1="186.9" x2="113.4" y2="136.6" stroke="#d2cbc0" stroke-opacity="0.013"/>
<line x1="351.6" y1="319.4" x2="292.2" y2="271.5" stroke="#d2cbc0" stroke-opacity="0.049"/>
<line x1="292.2" y1="271.5" x2="232.8" y2="223.6" stroke="#d2cbc0" stroke-opacity="0.040"/>
<line x1="232.8" y1="223.6" x2="173.3" y2="175.7" stroke="#d2cbc0" stroke-opacity="0.027"/>
<line x1="352.9" y1="302.6" x2="293.3" y2="256.9" stroke="#d2cbc0" stroke-opacity="0.047"/>
<line x1="293.3" y1="256.9" x2="233.6" y2="211.2" stroke="#d2cbc0" stroke-opacity="0.037"/>
<line x1="233.6" y1="211.2" x2="174.0" y2="165.5" stroke="#d2cbc0" stroke-opacity="0.023"/>
<line x1="350.5" y1="284.6" x2="291.3" y2="241.4" stroke="#d2cbc0" stroke-opacity="0.044"/>
<line x1="291.3" y1="241.4" x2="232.0" y2="198.2" stroke="#d2cbc0" stroke-opacity="0.033"/>
<line x1="232.0" y1="198.2" x2="172.8" y2="154.9" stroke="#d2cbc0" stroke-opacity="0.019"/>
<line x1="352.9" y1="258.2" x2="293.3" y2="218.4" stroke="#d2cbc0" stroke-opacity="0.038"/>
<line x1="293.3" y1="218.4" x2="233.7" y2="178.7" stroke="#d2cbc0" stroke-opacity="0.027"/>
<line x1="350.8" y1="244.5" x2="291.5" y2="206.6" stroke="#d2cbc0" stroke-opacity="0.035"/>
<line x1="291.5" y1="206.6" x2="232.2" y2="168.7" stroke="#d2cbc0" stroke-opacity="0.023"/>
<line x1="351.9" y1="233.8" x2="292.4" y2="197.3" stroke="#d2cbc0" stroke-opacity="0.032"/>
<line x1="292.4" y1="197.3" x2="233.0" y2="160.9" stroke="#d2cbc0" stroke-opacity="0.020"/>
<line x1="353.0" y1="223.9" x2="293.3" y2="188.8" stroke="#d2cbc0" stroke-opacity="0.029"/>
<line x1="293.3" y1="188.8" x2="233.7" y2="153.6" stroke="#d2cbc0" stroke-opacity="0.017"/>
<line x1="351.0" y1="213.1" x2="291.7" y2="179.4" stroke="#d2cbc0" stroke-opacity="0.026"/>
<line x1="291.7" y1="179.4" x2="232.4" y2="145.7" stroke="#d2cbc0" stroke-opacity="0.013"/>
<line x1="352.0" y1="204.7" x2="292.5" y2="172.1" stroke="#d2cbc0" stroke-opacity="0.023"/>
<line x1="353.0" y1="196.8" x2="293.3" y2="165.2" stroke="#d2cbc0" stroke-opacity="0.021"/>
<line x1="351.2" y1="188.0" x2="291.9" y2="157.7" stroke="#d2cbc0" stroke-opacity="0.017"/>
<line x1="352.1" y1="181.1" x2="292.6" y2="151.7" stroke="#d2cbc0" stroke-opacity="0.015"/>
<line x1="74.2" y1="345.3" x2="352.4" y2="162.5" stroke="url(#gv98)"/>
<line x1="-4.1" y1="238.3" x2="353.0" y2="88.7" stroke="url(#gv99)"/>
<line x1="209.9" y1="346.6" x2="-4.9" y2="73.2" stroke="url(#gu100)"/>
<line x1="-4.6" y1="164.5" x2="352.7" y2="54.5" stroke="url(#gv100)"/>
<line x1="351.8" y1="270.8" x2="-4.9" y2="22.3" stroke="url(#gu101)"/>
<line x1="-4.9" y1="121.6" x2="352.6" y2="34.7" stroke="url(#gv101)"/>
<line x1="353.0" y1="174.7" x2="-4.9" y2="3.1" stroke="url(#gu102)"/>
<line x1="-3.4" y1="93.3" x2="352.8" y2="21.6" stroke="url(#gv102)"/>
<line x1="351.8" y1="123.3" x2="0.6" y2="-5.0" stroke="url(#gu103)"/>
<line x1="-3.7" y1="73.7" x2="352.7" y2="12.5" stroke="url(#gv103)"/>
<line x1="352.5" y1="92.2" x2="23.0" y2="-5.0" stroke="url(#gu104)"/>
<line x1="-4.0" y1="59.2" x2="352.9" y2="5.7" stroke="url(#gv104)"/>
<line x1="351.8" y1="70.7" x2="45.5" y2="-5.0" stroke="url(#gu105)"/>
<line x1="-4.2" y1="48.0" x2="352.8" y2="0.5" stroke="url(#gv105)"/>
<line x1="352.3" y1="55.5" x2="68.0" y2="-5.0" stroke="url(#gu106)"/>
<line x1="-4.4" y1="39.0" x2="352.9" y2="-3.6" stroke="url(#gv106)"/>
<line x1="352.7" y1="44.0" x2="90.5" y2="-5.0" stroke="url(#gu107)"/>
<line x1="-4.5" y1="31.7" x2="334.3" y2="-5.0" stroke="url(#gv107)"/>
<line x1="352.2" y1="34.8" x2="113.1" y2="-5.0" stroke="url(#gu108)"/>
<line x1="-4.7" y1="25.7" x2="304.4" y2="-5.0" stroke="url(#gv108)"/>
<line x1="352.5" y1="27.5" x2="135.5" y2="-5.0" stroke="url(#gu109)"/>
<line x1="-4.8" y1="20.6" x2="274.6" y2="-5.0" stroke="url(#gv109)"/>
<line x1="352.8" y1="21.5" x2="158.2" y2="-5.0" stroke="url(#gu110)"/>
<line x1="-4.8" y1="16.3" x2="244.9" y2="-5.0" stroke="url(#gv110)"/>
<line x1="352.4" y1="16.4" x2="180.9" y2="-5.0" stroke="url(#gu111)"/>
<line x1="-4.9" y1="12.5" x2="214.9" y2="-5.0" stroke="url(#gv111)"/>
<line x1="352.6" y1="12.2" x2="203.7" y2="-5.0" stroke="url(#gu112)"/>
<line x1="-5.0" y1="9.2" x2="185.3" y2="-5.0" stroke="url(#gv112)"/>
<line x1="352.9" y1="8.5" x2="226.5" y2="-5.0" stroke="url(#gu113)"/>
<line x1="-4.5" y1="6.3" x2="155.8" y2="-5.0" stroke="url(#gv113)"/>
<line x1="352.5" y1="5.3" x2="249.4" y2="-5.0" stroke="url(#gu114)"/>
<line x1="-4.5" y1="3.7" x2="126.4" y2="-5.0" stroke="url(#gv114)"/>
<line x1="352.7" y1="2.6" x2="272.3" y2="-5.0" stroke="url(#gu115)"/>
<line x1="-4.6" y1="1.4" x2="97.1" y2="-5.0" stroke="url(#gv115)"/>
<line x1="352.9" y1="0.1" x2="295.2" y2="-5.0" stroke="url(#gu116)"/>
<line x1="-4.7" y1="-0.7" x2="67.8" y2="-5.0" stroke="url(#gv116)"/>
<line x1="352.6" y1="-2.1" x2="318.2" y2="-5.0" stroke="url(#gu117)"/>
<line x1="-4.7" y1="-2.5" x2="38.6" y2="-5.0" stroke="url(#gv117)"/>
<line x1="352.8" y1="-4.1" x2="341.3" y2="-5.0" stroke="url(#gu118)"/>
<line x1="-4.8" y1="-4.2" x2="9.5" y2="-5.0" stroke="url(#gv118)"/></g>
</svg>
<div class="t" style="left:426px;top:134px;color:#d3cfca;font-size:10.5px">Persp</div>
<svg class="a" style="left:412px;top:136px" width="12" height="11" viewBox="0 0 12 11"><g stroke="#d9d6d2" stroke-width="1" fill="none"><path d="M11 1L1 5.5 11 10M1 5.5h10"/></g></svg>
<div class="a" style="left:0;top:384px;width:486px;height:1px;background:#b2b2b2"></div>
<div class="a tabbar" style="left:0;top:385px;width:486px;height:20px"></div>
<svg class="a" style="left:452px;top:389px" width="10" height="11" viewBox="0 0 10 11"><rect x="1.5" y="5.5" width="7" height="4.6" fill="none" stroke="#484848" stroke-width="1.1"/><path d="M2.6 5.5V3.4a2.1 2.1 0 0 1 4.2 0v.5" fill="none" stroke="#484848" stroke-width="1.1"/></svg>
<div class="a dots" style="left:472px;top:390px;width:2px;height:12px"><i style="top:0"></i><i style="top:4px"></i><i style="top:8px"></i></div>
<div class="a tb" style="left:0;top:405px;width:486px;height:20px"></div>
<div class="a" style="left:0;top:425px;width:486px;height:1px;background:#a0a0a0"></div>
<div class="a" style="left:73px;top:407px;width:299px;height:16px;background:#efefef;border:1px solid #a6a6a6;border-radius:4px"></div>
<svg class="a" style="left:77px;top:410px" width="10" height="10" viewBox="0 0 10 10"><circle cx="4" cy="4" r="2.3" fill="none" stroke="#777" stroke-width="1.2"/><path d="M5.8 5.8L8.5 8.5" stroke="#777" stroke-width="1.4"/></svg>
<div class="vd" style="left:375px;top:405px;height:20px"></div>
<div class="vd" style="left:401px;top:405px;height:20px"></div>
<div class="vd" style="left:427px;top:405px;height:20px"></div>
<div class="vd" style="left:453px;top:405px;height:20px"></div>
<svg class="a" style="left:381px;top:407px" width="15" height="16" viewBox="0 0 15 16"><rect x="2" y="1" width="7" height="7" fill="#444"/><circle cx="4.6" cy="11.3" r="3.6" fill="#444"/><path d="M11 5.5l3.3 6H8.5z" fill="#444"/></svg>
<svg class="a" style="left:408px;top:409px" width="12.5" height="11.5" viewBox="0 0 15 14"><path d="M1 8.2L7.2 2h5.3l1 1v5.2L8.2 13z" fill="#444" transform="rotate(-8 7 7)"/><circle cx="11" cy="4.5" r="1" fill="#cbcbcb"/></svg>
<svg class="a" style="left:433px;top:408px" width="14" height="13" viewBox="0 0 14 13"><path d="M7 .5l1.9 4.2 4.6.5-3.4 3.1.9 4.5L7 10.5 2.9 12.8l.9-4.5L.5 5.2l4.6-.5z" fill="#6e6e6e"/></svg>
<svg class="a" style="left:458.5px;top:409px" width="15" height="12" viewBox="0 0 18 14"><path d="M1.2 7c2.4-3.4 4.9-4.4 7.8-4.4s5.4 1 7.8 4.4c-2.4 3.4-4.9 4.4-7.8 4.4s-5.4-1-7.8-4.4z" fill="none" stroke="#444" stroke-width="1.5"/><circle cx="9" cy="7" r="2.4" fill="#444"/><path d="M2.6 13.2L15.4 .8" stroke="#3e3e3e" stroke-width="1.6"/></svg>
<div class="t" style="left:475.5px;top:408px;font-size:10.5px">8</div>
<div class="a tb" style="left:0;top:426px;width:486px;height:20px"></div>
<div class="a" style="left:0;top:446px;width:486px;height:1px;background:#ababab"></div>
<div class="t l" style="left:0;top:428px">Assets</div>
<svg class="a" style="left:38px;top:431px" width="7" height="10" viewBox="0 0 7 10"><path d="M1.5 1L5.5 5 1.5 9" fill="none" stroke="#6a6a6a" stroke-width="1.4"/></svg>
<div class="t b l" style="left:50px;top:428px">Arts</div>
<div class="a" style="left:0;top:447px;width:486px;height:272px;background:#c2c2c2"></div>
<svg class="a" style="left:12px;top:459px" width="60" height="60" viewBox="0 0 60 60"><rect width="60" height="60" fill="#41464f"/><path d="M15 14.5L19.5 13.5 23 16.5 27 18.5 32 17 37 18.5 40 23 45.5 30.5 44 36 39 40.5 32 41.5 26 38 22 36 18.5 38.5 15 42 11 41 11.5 35.5 14 31.5 8.5 29 6.8 24.5 10 20 13.5 18.5Z" fill="#879ec4"/><path d="M15 14.5L19.5 13.5 23 16.5 27 18.5 32 17 37 18.5 40 23 45.5 30.5 44 36 39 40.5 32 41.5 26 38 22 36 18.5 38.5 15 42 11 41 11.5 35.5 14 31.5 8.5 29 6.8 24.5 10 20 13.5 18.5Z" fill="#fff" filter="url(#fmesh)"/><ellipse cx="14" cy="25.5" rx="3.2" ry="3.6" fill="#3f5f90" opacity=".7"/><ellipse cx="30" cy="30" rx="2.6" ry="3" fill="#456aa0" opacity=".55"/><path d="M23 16.5L27 18.5 32 17 37 18.5 33 23 26 22z" fill="#e6eef8" opacity=".5"/><path d="M15 42L11 41 11.5 35.5 15 34 18.5 38.5z" fill="#d5e1f1" opacity=".5"/><path d="M40 23L45.5 30.5 44 36 40 33z" fill="#dfe8f4" opacity=".45"/></svg>
<svg class="a" style="left:88px;top:459px" width="60" height="60" viewBox="0 0 60 60"><rect width="60" height="60" fill="#dfe6ea"/><rect width="60" height="60" filter="url(#ftex)"/><rect width="60" height="60" fill="#9aa3a8" opacity=".18"/><rect width="60" height="60" filter="url(#fbr)" opacity=".8"/><path d="M22 24l9 2 5 12-11 3z" fill="#cdbfb4" opacity=".85"/><path d="M41 20l13 4-5 17-9-6z" fill="#c4b3a6" opacity=".75"/><circle cx="17" cy="44" r="4.2" fill="#76533a" opacity=".85"/><path d="M5 25l9-5 3 8-8 5z" fill="#5c5a60" opacity=".75"/><path d="M14 52q10-12 22-4" stroke="#f2f2f2" stroke-width="2.5" fill="none" opacity=".8"/><rect x=".5" y=".5" width="59" height="59" fill="none" stroke="#9a9a9a"/></svg>
<svg class="a" style="left:164px;top:459px" width="60" height="60" viewBox="0 0 60 60"><rect width="60" height="60" fill="#7c7af2"/><rect width="60" height="60" filter="url(#fnrm)"/></svg>
<svg class="a" style="left:240px;top:459px" width="60" height="60" viewBox="0 0 60 60"><defs><radialGradient id="sph" cx=".38" cy=".33" r=".72"><stop offset="0" stop-color="#ffffff"/><stop offset=".38" stop-color="#f6f9fc"/><stop offset=".66" stop-color="#cfdcea"/><stop offset=".86" stop-color="#a5bbd3"/><stop offset="1" stop-color="#bccee1"/></radialGradient></defs><rect width="60" height="60" fill="#515151"/><circle cx="30" cy="30" r="27.8" fill="url(#sph)"/></svg>
<svg class="a" style="left:64px;top:480px" width="19" height="19" viewBox="0 0 19 19"><circle cx="9.5" cy="9.5" r="8.4" fill="#4e4e4e" stroke="#8e8e8e" stroke-width="1.2"/><path d="M7 5.4L13.4 9.5 7 13.6z" fill="#f2f2f2"/></svg>
<div class="a" style="left:11px;top:523px;width:62px;height:14px;background:#3c7ac4;border-radius:2px"></div>
<div class="t" style="left:11px;top:523px;width:62px;text-align:center;font-size:9.5px;color:#fff">racedoll_mi...</div>
<div class="t" style="left:87px;top:523px;width:62px;text-align:center;font-size:9.5px;">racedoll_mi...</div>
<div class="t" style="left:163px;top:523px;width:62px;text-align:center;font-size:9.5px;">racedoll_mi...</div>
<div class="t" style="left:239px;top:523px;width:62px;text-align:center;font-size:9.5px;">test</div>
<div class="a tabbar" style="left:488px;top:0;width:282px;height:20px"></div>
<div class="a tab" style="left:488px;top:0;width:104px;height:21px;border-top:1px solid #d8d8d8"></div>
<svg class="a" style="left:495.5px;top:5px" width="12" height="12" viewBox="0 0 12 12"><circle cx="6" cy="6" r="4.6" fill="#333"/><rect x="5.1" y="5" width="1.8" height="4.2" fill="#d8d8d8"/><rect x="5.1" y="2.6" width="1.8" height="1.7" fill="#d8d8d8"/></svg>
<div class="t" style="left:512px;top:3.3px"><span class="k" style="width:53.28px"><span style="transform:scaleX(0.661)">インスペクタ</span></span><span class="k" style="width:7.56px"><span style="transform:scaleX(0.562)">ー</span></span></div>
<svg class="a" style="left:743.5px;top:4px" width="10" height="11" viewBox="0 0 10 11"><rect x="1.5" y="5.5" width="7" height="4.6" fill="none" stroke="#484848" stroke-width="1.1"/><path d="M2.6 5.5V3.4a2.1 2.1 0 0 1 4.2 0v.5" fill="none" stroke="#484848" stroke-width="1.1"/></svg>
<div class="a dots" style="left:764px;top:5px;width:2px;height:12px"><i style="top:0"></i><i style="top:4px"></i><i style="top:8px"></i></div>
<div class="a" style="left:488px;top:20px;width:282px;height:54px;background:#cbcbcb"></div>
<div class="a" style="left:488px;top:74px;width:282px;height:1px;background:#9c9c9c"></div>
<svg class="a" style="left:494px;top:26px" width="32" height="32" viewBox="0 0 60 60"><rect width="60" height="60" fill="#505050"/><g transform="translate(6 7) scale(.8)"><path d="M15 14.5L19.5 13.5 23 16.5 27 18.5 32 17 37 18.5 40 23 45.5 30.5 44 36 39 40.5 32 41.5 26 38 22 36 18.5 38.5 15 42 11 41 11.5 35.5 14 31.5 8.5 29 6.8 24.5 10 20 13.5 18.5Z" fill="#9db7d8"/><path d="M15 14.5L19.5 13.5 23 16.5 27 18.5 32 17 37 18.5 40 23 45.5 30.5 44 36 39 40.5 32 41.5 26 38 22 36 18.5 38.5 15 42 11 41 11.5 35.5 14 31.5 8.5 29 6.8 24.5 10 20 13.5 18.5Z" fill="#fff" filter="url(#fmesh)" opacity=".9"/><path d="M15 14.5L19.5 13.5 23 16.5 27 18.5 32 17 37 18.5 40 23 45.5 30.5 44 36 39 40.5 32 41.5 26 38 22 36 18.5 38.5 15 42 11 41 11.5 35.5 14 31.5 8.5 29 6.8 24.5 10 20 13.5 18.5Z" fill="#dfe7f1" opacity=".45"/><ellipse cx="17" cy="27" rx="3.2" ry="3.6" fill="#4f6f9e" opacity=".8"/></g></svg>
<div class="t" style="left:534px;top:26.7px;font-size:12.7px">racedoll_middle_04_Model_19</div>
<svg class="a" style="left:720px;top:27.2px" width="12" height="12" viewBox="0 0 12 12"><circle cx="6" cy="6" r="4.5" fill="#3e3e3e"/><text x="6" y="8.8" font-size="7.5" font-weight="bold" text-anchor="middle" fill="#d0d0d0" font-family="Liberation Sans,sans-serif">?</text></svg>
<svg class="a" style="left:736.3px;top:28.5px" width="10" height="9.5" viewBox="0 0 13 12"><g stroke="#3a3a3a" stroke-width="1.6" fill="none"><path d="M1 3.5h5M9 3.5h3M7.5 1v5M1 8.5h2M6 8.5h6M4.5 6v5"/></g></svg>
<svg class="a" style="left:751.7px;top:27.8px" width="11" height="11" viewBox="0 0 14 14"><g fill="#3a3a3a"><circle cx="7" cy="7" r="4.6"/><rect x="5.8" y="0.6" width="2.4" height="12.8" rx=".6" transform="rotate(0 7 7)"/><rect x="5.8" y="0.6" width="2.4" height="12.8" rx=".6" transform="rotate(45 7 7)"/><rect x="5.8" y="0.6" width="2.4" height="12.8" rx=".6" transform="rotate(90 7 7)"/><rect x="5.8" y="0.6" width="2.4" height="12.8" rx=".6" transform="rotate(135 7 7)"/></g><circle cx="7" cy="7" r="2" fill="#cbcbcb"/></svg>
<div class="a" style="left:730px;top:48px;width:30px;height:18px;background:#e4e4e4;border:1px solid #b0b0b0;border-radius:3px;line-height:16px;text-align:center">開<span class="k" style="width:9.36px"><span style="transform:scaleX(0.696)">く</span></span></div>
<div class="a" style="left:531px;top:79px;width:202px;height:23px;border:1px solid #a2a2a2;border-radius:3px;background:#e4e4e4"></div>
<div class="a" style="left:532px;top:80px;width:44px;height:21px;background:#b4b4b4;border-radius:2px 0 0 2px"></div>
<div class="a" style="left:576px;top:80px;width:1px;height:21px;background:#a8a8a8"></div>
<div class="a" style="left:603px;top:80px;width:1px;height:21px;background:#a8a8a8"></div>
<div class="a" style="left:671px;top:80px;width:1px;height:21px;background:#a8a8a8"></div>
<div class="t" style="left:532px;top:82px;width:44px;text-align:center;font-size:12px">Model</div>
<div class="t" style="left:577px;top:82px;width:26px;text-align:center;font-size:12px">Rig</div>
<div class="t" style="left:604px;top:82px;width:67px;text-align:center;font-size:12px">Animation</div>
<div class="t" style="left:672px;top:82px;width:60px;text-align:center;font-size:12px">Materials</div>
<div class="lbl b" style="top:107.4px;left:507px"><span class="k" style="width:8.88px"><span style="transform:scaleX(0.661)">シ</span></span><span class="k" style="width:7.56px"><span style="transform:scaleX(0.562)">ー</span></span><span class="k" style="width:8.88px"><span style="transform:scaleX(0.661)">ン</span></span></div>
<div class="lbl" style="top:127.4px;left:507px"><span class="k" style="width:17.76px"><span style="transform:scaleX(0.661)">スケ</span></span><span class="k" style="width:7.56px"><span style="transform:scaleX(0.562)">ー</span></span><span class="k" style="width:17.76px"><span style="transform:scaleX(0.661)">ルフ</span></span><span class="k" style="width:7.56px"><span style="transform:scaleX(0.562)">ァ</span></span><span class="k" style="width:17.76px"><span style="transform:scaleX(0.661)">クタ</span></span><span class="k" style="width:7.56px"><span style="transform:scaleX(0.562)">ー</span></span></div>
<div class="fld n" style="left:628.5px;top:127.4px;width:132.5px">0.01</div>
<div class="lbl" style="top:147.4px;left:507px"><span class="k" style="width:17.76px"><span style="transform:scaleX(0.661)">ユニ</span></span><span class="k" style="width:7.56px"><span style="transform:scaleX(0.562)">ッ</span></span><span class="k" style="width:8.88px"><span style="transform:scaleX(0.661)">ト</span></span><span class="k" style="width:9.36px"><span style="transform:scaleX(0.696)">を</span></span>変換<span class="k" style="width:18.72px"><span style="transform:scaleX(0.696)">する</span></span></div>
<div class="cb on" style="left:628.5px;top:149.5px"></div>
<div class="lbl" style="top:166.9px;left:589px"><span class="l">1cm (</span><span class="k" style="width:8.88px"><span style="transform:scaleX(0.661)">フ</span></span><span class="k" style="width:7.56px"><span style="transform:scaleX(0.562)">ァ</span></span><span class="k" style="width:17.76px"><span style="transform:scaleX(0.661)">イル</span></span><span class="l">) </span><span class="k" style="width:18.72px"><span style="transform:scaleX(0.696)">から</span></span><span class="l"> 1m (Unity) </span><span style="margin-left:3px"><span class="k" style="width:9.36px"><span style="transform:scaleX(0.696)">へ</span></span></span></div>
<div class="lbl" style="top:187.4px;width:117px;overflow:hidden"><span class="k" style="width:44.40px"><span style="transform:scaleX(0.661)">ブレンドシ</span></span><span class="k" style="width:7.56px"><span style="transform:scaleX(0.562)">ェ</span></span><span class="k" style="width:17.76px"><span style="transform:scaleX(0.661)">イプ</span></span><span class="k" style="width:9.36px"><span style="transform:scaleX(0.696)">の</span></span><span class="k" style="width:26.64px"><span style="transform:scaleX(0.661)">インポ</span></span><span class="k" style="width:7.56px"><span style="transform:scaleX(0.562)">ー</span></span><span class="k" style="width:8.88px"><span style="transform:scaleX(0.661)">ト</span></span></div>
<div class="cb on" style="left:628.5px;top:189.5px"></div>
<div class="lbl" style="top:207.4px;left:507px">可視性<span class="k" style="width:9.36px"><span style="transform:scaleX(0.696)">の</span></span><span class="k" style="width:26.64px"><span style="transform:scaleX(0.661)">インポ</span></span><span class="k" style="width:7.56px"><span style="transform:scaleX(0.562)">ー</span></span><span class="k" style="width:8.88px"><span style="transform:scaleX(0.661)">ト</span></span></div>
<div class="cb on" style="left:628.5px;top:209.5px"></div>
<div class="lbl" style="top:227.4px;left:507px"><span class="k" style="width:26.64px"><span style="transform:scaleX(0.661)">カメラ</span></span><span class="k" style="width:9.36px"><span style="transform:scaleX(0.696)">の</span></span><span class="k" style="width:26.64px"><span style="transform:scaleX(0.661)">インポ</span></span><span class="k" style="width:7.56px"><span style="transform:scaleX(0.562)">ー</span></span><span class="k" style="width:8.88px"><span style="transform:scaleX(0.661)">ト</span></span></div>
<div class="cb on" style="left:628.5px;top:229.5px"></div>
<div class="lbl" style="top:247.4px;left:507px"><span class="k" style="width:26.64px"><span style="transform:scaleX(0.661)">ライト</span></span><span class="k" style="width:9.36px"><span style="transform:scaleX(0.696)">の</span></span><span class="k" style="width:26.64px"><span style="transform:scaleX(0.661)">インポ</span></span><span class="k" style="width:7.56px"><span style="transform:scaleX(0.562)">ー</span></span><span class="k" style="width:8.88px"><span style="transform:scaleX(0.661)">ト</span></span></div>
<div class="cb on" style="left:628.5px;top:249.5px"></div>
<div class="lbl" style="top:266.6px;left:507px"><span class="k" style="width:44.40px"><span style="transform:scaleX(0.661)">ヒエラルキ</span></span><span class="k" style="width:7.56px"><span style="transform:scaleX(0.562)">ー</span></span><span class="k" style="width:9.36px"><span style="transform:scaleX(0.696)">を</span></span>保存</div>
<div class="cb" style="left:628.5px;top:268.7px"></div>
<div class="lbl" style="top:286.6px;left:507px"><span class="k" style="width:44.40px"><span style="transform:scaleX(0.661)">ヒエラルキ</span></span><span class="k" style="width:7.56px"><span style="transform:scaleX(0.562)">ー</span></span><span class="k" style="width:9.36px"><span style="transform:scaleX(0.696)">を</span></span>名前<span class="k" style="width:9.36px"><span style="transform:scaleX(0.696)">で</span></span><span class="k" style="width:8.88px"><span style="transform:scaleX(0.661)">ソ</span></span><span class="k" style="width:7.56px"><span style="transform:scaleX(0.562)">ー</span></span><span class="k" style="width:8.88px"><span style="transform:scaleX(0.661)">ト</span></span></div>
<div class="cb on" style="left:628.5px;top:288.7px"></div>
<div class="lbl b" style="top:306.6px;left:507px"><span class="k" style="width:8.88px"><span style="transform:scaleX(0.661)">メ</span></span><span class="k" style="width:7.56px"><span style="transform:scaleX(0.562)">ッ</span></span><span class="k" style="width:8.88px"><span style="transform:scaleX(0.661)">シ</span></span><span class="k" style="width:7.56px"><span style="transform:scaleX(0.562)">ュ</span></span></div>
<div class="lbl" style="top:326.6px;left:507px"><span class="k" style="width:8.88px"><span style="transform:scaleX(0.661)">メ</span></span><span class="k" style="width:7.56px"><span style="transform:scaleX(0.562)">ッ</span></span><span class="k" style="width:8.88px"><span style="transform:scaleX(0.661)">シ</span></span><span class="k" style="width:7.56px"><span style="transform:scaleX(0.562)">ュ</span></span>圧縮</div>
<div class="dd" style="left:628.5px;top:327.0px;width:132.5px"><span class="v"><span class="k" style="width:17.76px"><span style="transform:scaleX(0.661)">オフ</span></span></span></div>
<div class="lbl" style="top:346.6px;left:507px">読<span class="k" style="width:10.44px"><span style="transform:scaleX(0.777)">み</span></span>込<span class="k" style="width:10.44px"><span style="transform:scaleX(0.777)">み</span></span>/書<span class="k" style="width:10.44px"><span style="transform:scaleX(0.777)">き</span></span>込<span class="k" style="width:10.44px"><span style="transform:scaleX(0.777)">み</span></span>有効</div>
<div class="cb" style="left:628.5px;top:348.7px"></div>
<div class="lbl" style="top:367.0px;left:507px"><span class="k" style="width:8.88px"><span style="transform:scaleX(0.661)">メ</span></span><span class="k" style="width:7.56px"><span style="transform:scaleX(0.562)">ッ</span></span><span class="k" style="width:8.88px"><span style="transform:scaleX(0.661)">シ</span></span><span class="k" style="width:7.56px"><span style="transform:scaleX(0.562)">ュ</span></span><span class="k" style="width:9.36px"><span style="transform:scaleX(0.696)">の</span></span>最適化</div>
<div class="dd l" style="left:628.5px;top:367.0px;width:132.5px"><span class="v">Everything</span></div>
<div class="lbl" style="top:387.0px;left:507px"><span class="k" style="width:35.52px"><span style="transform:scaleX(0.661)">コライダ</span></span><span class="k" style="width:7.56px"><span style="transform:scaleX(0.562)">ー</span></span><span class="k" style="width:9.36px"><span style="transform:scaleX(0.696)">の</span></span>生成</div>
<div class="cb" style="left:628.5px;top:389.1px"></div>
<div class="lbl b" style="top:405.5px;left:507px"><span class="k" style="width:44.40px"><span style="transform:scaleX(0.661)">ジオメトリ</span></span></div>
<div class="lbl" style="top:424.8px;left:507px"><span class="k" style="width:17.76px"><span style="transform:scaleX(0.661)">クア</span></span><span class="k" style="width:7.56px"><span style="transform:scaleX(0.562)">ッ</span></span><span class="k" style="width:8.88px"><span style="transform:scaleX(0.661)">ド</span></span><span class="k" style="width:9.36px"><span style="transform:scaleX(0.696)">を</span></span>保持</div>
<div class="cb" style="left:628.5px;top:426.9px"></div>
<div class="lbl" style="top:444.8px;left:507px">頂点<span class="k" style="width:9.36px"><span style="transform:scaleX(0.696)">の</span></span>結合</div>
<div class="cb on" style="left:628.5px;top:446.9px"></div>
<div class="lbl" style="top:464.8px;left:507px"><span class="k" style="width:26.64px"><span style="transform:scaleX(0.661)">インデ</span></span><span class="k" style="width:7.56px"><span style="transform:scaleX(0.562)">ッ</span></span><span class="k" style="width:17.76px"><span style="transform:scaleX(0.661)">クス</span></span>形式</div>
<div class="dd" style="left:628.5px;top:465.0px;width:132.5px"><span class="v">自動</span></div>
<div class="lbl" style="top:484.8px;width:117px;overflow:hidden">非推奨<span class="k" style="width:9.36px"><span style="transform:scaleX(0.696)">の</span></span><span class="k" style="width:44.40px"><span style="transform:scaleX(0.661)">ブレンドシ</span></span><span class="k" style="width:7.56px"><span style="transform:scaleX(0.562)">ェ</span></span><span class="k" style="width:17.76px"><span style="transform:scaleX(0.661)">イプ</span></span>(</div>
<div class="cb" style="left:628.5px;top:486.9px"></div>
<div class="lbl" style="top:504.8px;left:507px">法線</div>
<div class="dd" style="left:628.5px;top:505.0px;width:132.5px"><span class="v"><span class="k" style="width:26.64px"><span style="transform:scaleX(0.661)">インポ</span></span><span class="k" style="width:7.56px"><span style="transform:scaleX(0.562)">ー</span></span><span class="k" style="width:8.88px"><span style="transform:scaleX(0.661)">ト</span></span></span></div>
<div class="lbl" style="top:524.8px;left:507px"><span class="k" style="width:44.40px"><span style="transform:scaleX(0.661)">ブレンドシ</span></span><span class="k" style="width:7.56px"><span style="transform:scaleX(0.562)">ェ</span></span><span class="k" style="width:17.76px"><span style="transform:scaleX(0.661)">イプ</span></span><span class="k" style="width:9.36px"><span style="transform:scaleX(0.696)">の</span></span>法線</div>
<div class="dd l" style="left:628.5px;top:525.0px;width:132.5px"><span class="v">Calculate</span></div>
<div class="lbl" style="top:544.8px;left:507px">法線<span class="k" style="width:8.88px"><span style="transform:scaleX(0.661)">モ</span></span><span class="k" style="width:7.56px"><span style="transform:scaleX(0.562)">ー</span></span><span class="k" style="width:8.88px"><span style="transform:scaleX(0.661)">ド</span></span></div>
<div class="dd l" style="left:628.5px;top:545.0px;width:132.5px"><span class="v">Area And Angle Weighted</span></div>
<div class="lbl" style="top:564.8px;left:507px"><span class="k" style="width:17.76px"><span style="transform:scaleX(0.661)">スム</span></span><span class="k" style="width:7.56px"><span style="transform:scaleX(0.562)">ー</span></span><span class="k" style="width:26.64px"><span style="transform:scaleX(0.661)">スネス</span></span><span class="k" style="width:9.36px"><span style="transform:scaleX(0.696)">の</span></span><span class="k" style="width:8.88px"><span style="transform:scaleX(0.661)">ソ</span></span><span class="k" style="width:7.56px"><span style="transform:scaleX(0.562)">ー</span></span><span class="k" style="width:8.88px"><span style="transform:scaleX(0.661)">ス</span></span></div>
<div class="dd l" style="left:628.5px;top:565.0px;width:132.5px"><span class="v">Prefer Smoothing Groups</span></div>
<div class="lbl" style="top:584.8px;left:507px">角度<span class="k" style="width:9.36px"><span style="transform:scaleX(0.696)">を</span></span><span class="k" style="width:17.76px"><span style="transform:scaleX(0.661)">スム</span></span><span class="k" style="width:7.56px"><span style="transform:scaleX(0.562)">ー</span></span><span class="k" style="width:26.64px"><span style="transform:scaleX(0.661)">ジング</span></span></div>
<div class="a" style="left:629px;top:593px;width:78px;height:2px;background:#8c8c8c;border-radius:1px"></div>
<div class="a" style="left:650px;top:588.5px;width:11px;height:11px;background:#5c5c5c;border-radius:6px"></div>
<div class="fld n" style="left:713.0px;top:585.0px;width:48.0px">60</div>
<div class="lbl" style="top:604.8px;left:507px">接線</div>
<div class="dd l" style="left:628.5px;top:605.0px;width:132.5px"><span class="v">Calculate Mikktspace</span></div>
<div class="lbl" style="top:624.8px;left:507px"><span class="uv">UV</span><span class="k" style="width:9.36px"><span style="transform:scaleX(0.696)">を</span></span><span class="k" style="width:17.76px"><span style="transform:scaleX(0.661)">スワ</span></span><span class="k" style="width:7.56px"><span style="transform:scaleX(0.562)">ッ</span></span><span class="k" style="width:8.88px"><span style="transform:scaleX(0.661)">プ</span></span></div>
<div class="cb" style="left:628.5px;top:626.9px"></div>
<div class="lbl" style="top:644.8px;left:507px"><span class="k" style="width:35.52px"><span style="transform:scaleX(0.661)">ライトマ</span></span><span class="k" style="width:7.56px"><span style="transform:scaleX(0.562)">ッ</span></span><span class="k" style="width:8.88px"><span style="transform:scaleX(0.661)">プ</span></span><span class="uv">UV</span><span class="k" style="width:9.36px"><span style="transform:scaleX(0.696)">を</span></span>生成</div>
<div class="cb on" style="left:628.5px;top:646.9px"></div>
<div class="a" style="left:496px;top:670.5px;border:4.2px solid transparent;border-left:8px solid #6a6a6a;border-right:0"></div>
<div class="lbl" style="top:665.5px;left:507px"><span class="k" style="width:35.52px"><span style="transform:scaleX(0.661)">ライトマ</span></span><span class="k" style="width:7.56px"><span style="transform:scaleX(0.562)">ッ</span></span><span class="k" style="width:8.88px"><span style="transform:scaleX(0.661)">プ</span></span><span class="uv">UV</span>設定</div>
<div class="a" style="left:650.0px;top:694px;width:53.0px;height:19px;background:#cecece;border:1px solid #c0c0c0;border-bottom-color:#b4b4b4;border-radius:3px;line-height:17px;text-align:center;color:#727272">元<span class="k" style="width:9.36px"><span style="transform:scaleX(0.696)">に</span></span>戻<span class="k" style="width:9.36px"><span style="transform:scaleX(0.696)">す</span></span></div>
<div class="a" style="left:707.5px;top:694px;width:53.5px;height:19px;background:#cecece;border:1px solid #c0c0c0;border-bottom-color:#b4b4b4;border-radius:3px;line-height:17px;text-align:center;color:#727272">適用<span class="k" style="width:18.72px"><span style="transform:scaleX(0.696)">する</span></span></div>
<div class="a" style="left:488px;top:75px;width:1px;height:640px;background:#d0d0d0"></div>
<div class="a" style="left:766px;top:20px;width:1px;height:696px;background:#aaaaaa"></div>
<div class="a" style="left:767px;top:20px;width:3px;height:695px;background:#c4c4c4"></div>
<div class="a" style="left:768px;top:39px;width:3px;height:504px;background:#8e8e8e;border-radius:2px 0 0 2px"></div>
<div class="a" style="left:488px;top:715px;width:282px;height:1px;background:#a3a3a3"></div>
<svg width="0" height="0" style="position:absolute"><defs>
<filter id="fmesh" x="0" y="0" width="100%" height="100%" color-interpolation-filters="sRGB"><feTurbulence type="fractalNoise" baseFrequency="0.28" numOctaves="3" seed="4"/><feColorMatrix values="-0.95 0 0 0 0.99  -0.85 0 0 0 1.03  -0.5 0 0 0 1.02  0 0 0 0 1"/><feComposite in2="SourceGraphic" operator="in"/></filter>
<filter id="ftex" x="0" y="0" width="100%" height="100%" color-interpolation-filters="sRGB"><feTurbulence type="fractalNoise" baseFrequency="0.3" numOctaves="3" seed="7"/><feColorMatrix values="-1.15 0 0 0 1.31  -0.75 0 0 0 1.21  -0.45 0 0 0 1.13  0 0 0 0 1"/></filter>
<filter id="fbr" x="0" y="0" width="100%" height="100%" color-interpolation-filters="sRGB"><feTurbulence type="fractalNoise" baseFrequency="0.09" numOctaves="2" seed="23"/><feColorMatrix values="0 0 0 0 0.62  0 0 0 0 0.50  0 0 0 0 0.42  0 5 0 0 -2.75"/></filter>
<filter id="fnrm" x="0" y="0" width="100%" height="100%" color-interpolation-filters="sRGB"><feTurbulence type="fractalNoise" baseFrequency="0.42" numOctaves="2" seed="11"/><feColorMatrix values="0.55 0 0 0 0.24  0 0.55 0 0 0.23  0 0 0.2 0 0.84  0 0 0 0 1"/></filter>
</defs></svg>
<svg class="a" style="left:400px;top:45px" width="86" height="82" viewBox="0 0 86 82"><defs><linearGradient id="cg" x1="0" x2="1"><stop offset="0" stop-color="#79d23a"/><stop offset=".5" stop-color="#4fb516"/><stop offset="1" stop-color="#3a8f0e"/></linearGradient><linearGradient id="cr" x1="0" y1="0" x2="1" y2="1"><stop offset="0" stop-color="#a81f10"/><stop offset="1" stop-color="#e2391f"/></linearGradient><linearGradient id="cb" x1="0" x2="1"><stop offset="0" stop-color="#2d6be0"/><stop offset="1" stop-color="#5b9bff"/></linearGradient><linearGradient id="cw" x1="0" x2="1"><stop offset="0" stop-color="#f4f4f4"/><stop offset="1" stop-color="#bdbdbd"/></linearGradient></defs><polygon points="29.5,42.2 23.7,32.8 18.7,39.6" fill="url(#cw)"/><ellipse cx="21.2" cy="36.2" rx="4.2" ry="2.3" transform="rotate(-54.1 21.2 36.2)" fill="#f3f3f3"/><polygon points="26.8,50.5 6.5,52.3 14.5,66.7" fill="url(#cw)"/><ellipse cx="10.5" cy="59.5" rx="8.2" ry="3.7" transform="rotate(-118.9 10.5 59.5)" fill="#d9d9d9"/><polygon points="35.4,55.5 30.8,66.3 40.0,66.3" fill="#ececec"/><ellipse cx="35.4" cy="66.3" rx="4.6" ry="1.6" transform="rotate(180.0 35.4 66.3)" fill="#ffffff"/><polygon points="44.0,43.6 57.8,43.6 53.8,34.0" fill="url(#cb)"/><ellipse cx="55.8" cy="38.8" rx="5.2" ry="2.6" transform="rotate(67.9 55.8 38.8)" fill="#4a8cf6"/><polygon points="41.5,51.8 52.0,71.0 62.6,57.6" fill="url(#cr)"/><ellipse cx="57.3" cy="64.3" rx="8.6" ry="4.3" transform="rotate(128.3 57.3 64.3)" fill="#dd3a22"/><polygon points="35.4,38.6 44.2,42.8 35.4,47.3 26.8,42.8" fill="#e2e2e2"/><polygon points="26.8,42.8 35.4,47.3 35.4,57.0 27.0,52.6" fill="#c9c9c9"/><polygon points="35.4,47.3 44.2,42.8 44.0,52.6 35.4,57.0" fill="#b2b2b2"/><polygon points="35.3,39.5 44.3,20.3 26.5,20.3" fill="url(#cg)"/><ellipse cx="35.4" cy="20.3" rx="8.9" ry="2.3" transform="rotate(0.3 35.4 20.3)" fill="#63c522"/><text x="34.4" y="12.5" font-size="11.5" font-weight="bold" fill="#f4f4f4" text-anchor="middle" font-family="Liberation Sans,sans-serif">y</text><text x="61.5" y="38.3" font-size="11.5" font-weight="bold" fill="#f4f4f4" text-anchor="middle" font-family="Liberation Sans,sans-serif">z</text><text x="65.2" y="73.3" font-size="11.5" font-weight="bold" fill="#f4f4f4" text-anchor="middle" font-family="Liberation Sans,sans-serif">x</text><rect x="65.5" y="13.0" width="8" height="5.5" fill="#c9c5c0"/><path d="M67.1 13.0v-1.8a2.4 2.4 0 0 1 4.8 0" fill="none" stroke="#c9c5c0" stroke-width="1.2"/></svg>
</div></body></html>
